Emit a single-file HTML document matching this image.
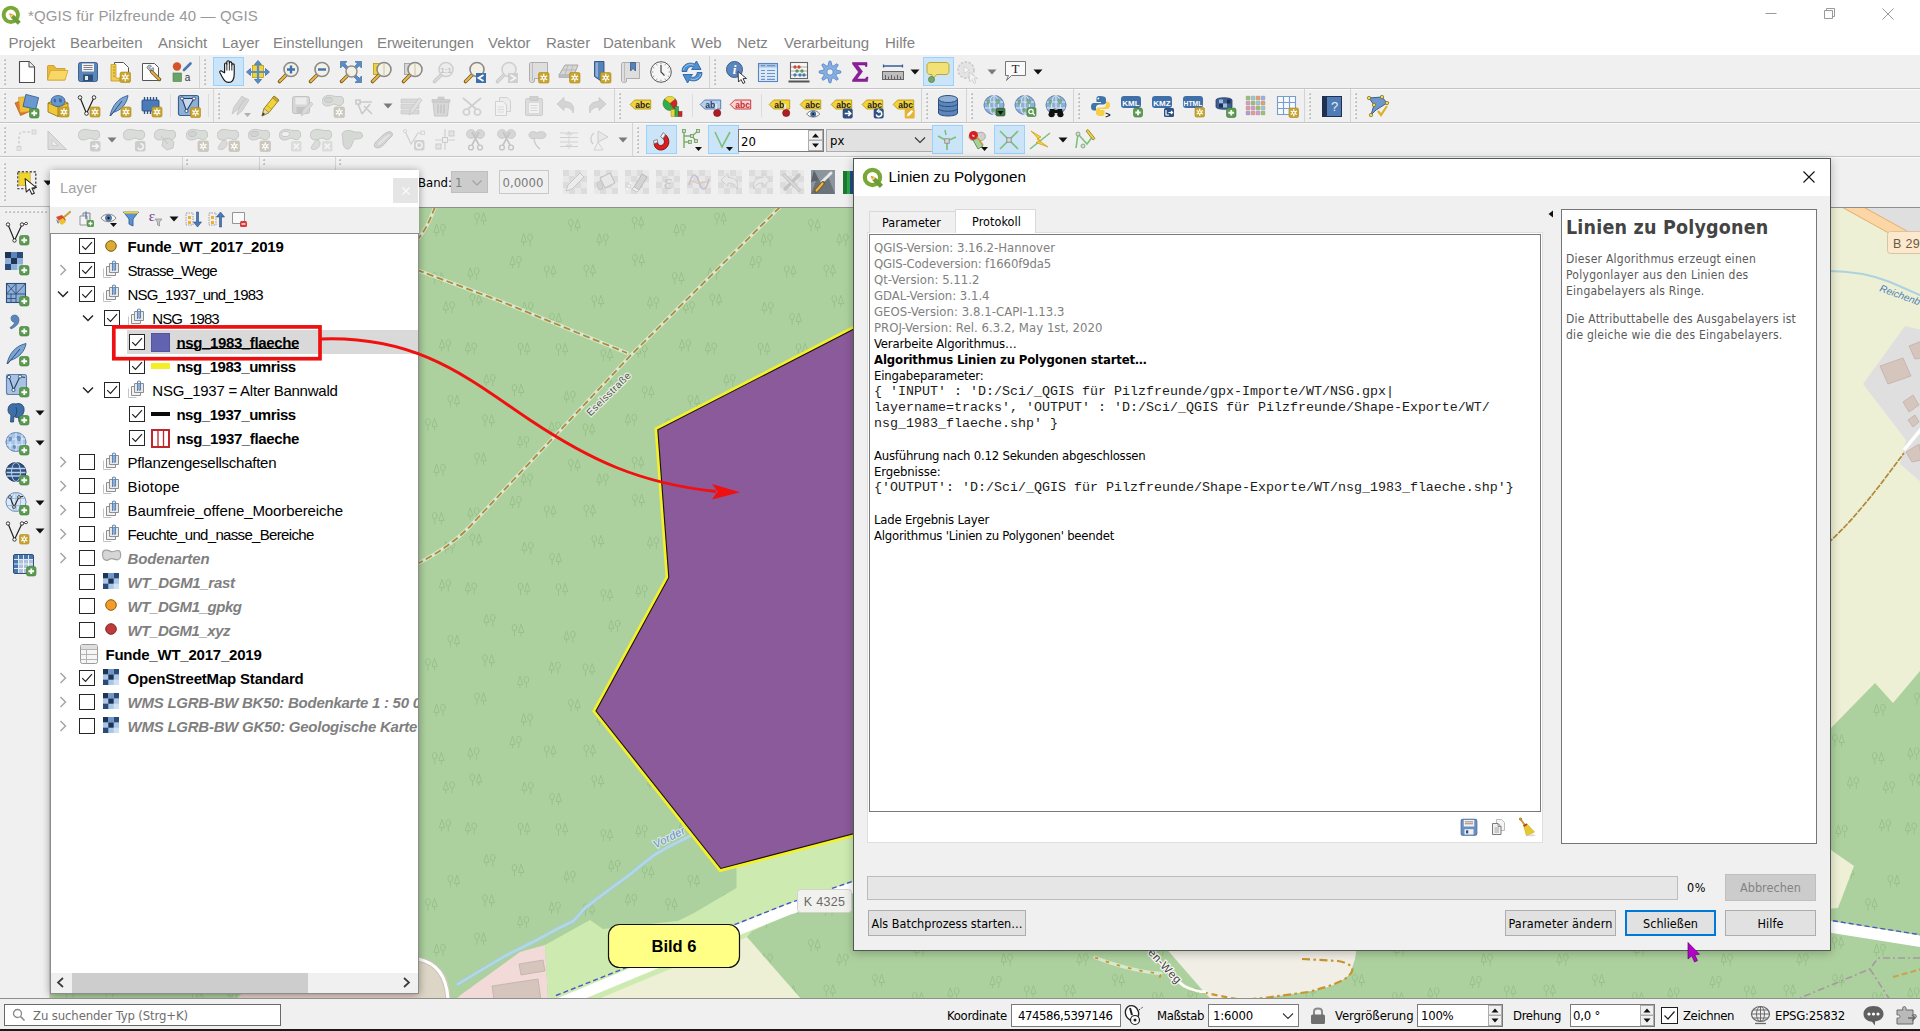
<!DOCTYPE html>
<html lang="de">
<head>
<meta charset="utf-8">
<title>QGIS für Pilzfreunde 40 — QGIS</title>
<style>
html,body{margin:0;padding:0;}
body{width:1920px;height:1031px;overflow:hidden;background:#f0f0f0;position:relative;font-family:"Liberation Sans",sans-serif;font-size:15px;color:#000;}
.a{position:absolute;}
.t{position:absolute;white-space:nowrap;line-height:1;}
.dj{font-family:"DejaVu Sans Condensed","DejaVu Sans","Liberation Sans",sans-serif;}
.mono{font-family:"Liberation Mono",monospace;}
svg{position:absolute;overflow:visible;}
</style>
</head>
<body>
<!-- title bar -->
<div class="a" style="left:0;top:0;width:1920px;height:30px;background:#fff;"></div>
<svg style="left:1.400px;top:4.800px" width="21.600" height="21.600" viewBox="0 0 22 22"><circle cx="10" cy="10" r="7.300" fill="none" stroke="#7aa838" stroke-width="4"/><path d="M11.500 11.500L18.600 18.600" stroke="#6c9c34" stroke-width="4.300"/><path d="M8.300 8.300L12.800 9.800L9.800 12.800Z" fill="#ee8a1e"/><path d="M10.500 10L12.800 9.800L9.800 12.800L10 10.500Z" fill="#f0e070"/></svg>
<div class="t" style="left:28px;top:7.9px;font-size:15px;color:#999;letter-spacing:0.13px;">*QGIS für Pilzfreunde 40 — QGIS</div>
<svg style="left:1760px;top:0" width="160" height="30" viewBox="0 0 160 30">
  <path d="M5.5 13.5 H16.5" stroke="#999" stroke-width="1" fill="none"/>
  <path d="M64.500 10.500 h8 v8 h-8 z M66.500 10.500 v-2 h8 v8 h-2" stroke="#999" stroke-width="1" fill="none"/>
  <path d="M122.500 8.500 L133.500 19.500 M133.500 8.500 L122.500 19.500" stroke="#999" stroke-width="1" fill="none"/>
</svg>
<!-- menu bar -->
<div class="a" style="left:0;top:30px;width:1920px;height:25px;background:#fff;"></div>
<div class="t" style="left:8.5px;top:34.5px;font-size:15px;color:#828282;">Projekt</div>
<div class="t" style="left:70px;top:34.5px;font-size:15px;color:#828282;">Bearbeiten</div>
<div class="t" style="left:158px;top:34.5px;font-size:15px;color:#828282;">Ansicht</div>
<div class="t" style="left:222px;top:34.5px;font-size:15px;color:#828282;">Layer</div>
<div class="t" style="left:273px;top:34.5px;font-size:15px;color:#828282;">Einstellungen</div>
<div class="t" style="left:377px;top:34.5px;font-size:15px;color:#828282;">Erweiterungen</div>
<div class="t" style="left:488px;top:34.5px;font-size:15px;color:#828282;">Vektor</div>
<div class="t" style="left:546px;top:34.5px;font-size:15px;color:#828282;">Raster</div>
<div class="t" style="left:603px;top:34.5px;font-size:15px;color:#828282;">Datenbank</div>
<div class="t" style="left:691px;top:34.5px;font-size:15px;color:#828282;">Web</div>
<div class="t" style="left:737px;top:34.5px;font-size:15px;color:#828282;">Netz</div>
<div class="t" style="left:784px;top:34.5px;font-size:15px;color:#828282;">Verarbeitung</div>
<div class="t" style="left:885px;top:34.5px;font-size:15px;color:#828282;">Hilfe</div>
<!-- toolbars -->
<div class="a" style="left:0;top:55px;width:1920px;height:152px;background:#f0f0f0;"></div>
<div class="a" style="left:0px;top:88px;width:1920px;height:1px;background:#c4c4c4;"></div>
<div class="a" style="left:0px;top:122px;width:1920px;height:1px;background:#c4c4c4;"></div>
<div class="a" style="left:0px;top:156px;width:1920px;height:1px;background:#c4c4c4;"></div>
<div class="a" style="left:0px;top:89px;width:1920px;height:1px;background:#fafafa;"></div>
<div class="a" style="left:0px;top:123px;width:1920px;height:1px;background:#fafafa;"></div>
<div class="a" style="left:0px;top:157px;width:1920px;height:1px;background:#fafafa;"></div>
<svg style="left:2.5px;top:57px" width="4" height="28" viewBox="0 0 4 28"><rect x="1.300" y="2.3" width="1.500" height="1.500" fill="#a2a2a2"/><rect x=".3" y="1.3" width="1.200" height="1.200" fill="#fdfdfd"/><rect x="1.300" y="6.3" width="1.500" height="1.500" fill="#a2a2a2"/><rect x=".3" y="5.3" width="1.200" height="1.200" fill="#fdfdfd"/><rect x="1.300" y="10.3" width="1.500" height="1.500" fill="#a2a2a2"/><rect x=".3" y="9.3" width="1.200" height="1.200" fill="#fdfdfd"/><rect x="1.300" y="14.3" width="1.500" height="1.500" fill="#a2a2a2"/><rect x=".3" y="13.3" width="1.200" height="1.200" fill="#fdfdfd"/><rect x="1.300" y="18.3" width="1.500" height="1.500" fill="#a2a2a2"/><rect x=".3" y="17.3" width="1.200" height="1.200" fill="#fdfdfd"/><rect x="1.300" y="22.3" width="1.500" height="1.500" fill="#a2a2a2"/><rect x=".3" y="21.3" width="1.200" height="1.200" fill="#fdfdfd"/><rect x="1.300" y="26.3" width="1.500" height="1.500" fill="#a2a2a2"/><rect x=".3" y="25.3" width="1.200" height="1.200" fill="#fdfdfd"/></svg>
<svg style="left:14.0px;top:60.0px" width="24" height="24" viewBox="0 0 24 24"><path d="M5.500 1.500H15L20.500 7V22.500H5.500Z" fill="#fff" stroke="#4a4a4a" stroke-width="1.100" stroke-linejoin="round"/><path d="M15 1.500V7H20.500" fill="#eee" stroke="#4a4a4a" stroke-width="1" stroke-linejoin="round"/></svg>
<svg style="left:45.0px;top:60.0px" width="24" height="24" viewBox="0 0 24 24"><path d="M2.500 6V20H20V8.500H11L9 5.500H3Z" fill="#e9b93c" stroke="#c7951e" stroke-width=".8"/><path d="M2.500 20L5.500 10.500H23L20 20Z" fill="#f7d766" stroke="#d6a62a" stroke-width=".8"/></svg>
<svg style="left:76.0px;top:60.0px" width="24" height="24" viewBox="0 0 24 24"><rect x="2.500" y="2.500" width="19" height="19" rx="2" fill="#5d86b8" stroke="#3d628f" stroke-width="1"/><rect x="6" y="3.500" width="12" height="8" fill="#f2f2f2"/><path d="M7.500 5.500H16.500M7.500 7.500H16.500M7.500 9.500H16.500" stroke="#666" stroke-width=".8"/><rect x="7" y="14.500" width="10" height="6.500" fill="#2f4f78"/><rect x="9" y="16" width="3" height="4" fill="#e8e8e8"/></svg>
<svg style="left:108.0px;top:60.0px" width="24" height="24" viewBox="0 0 24 24"><path d="M6.500 2.500H15.500L20.500 7.500V20.500H6.500Z" fill="#fff" stroke="#555" stroke-width="1"/><path d="M3 4.500H8V18H12V21H3Z" fill="#f1cd55" stroke="#c39a1c" stroke-width=".8"/><path d="M5 7H7M5 10H7M5 13H7M5 16H7" stroke="#a27b12" stroke-width=".8"/><rect x="12" y="12" width="10.5" height="10.5" rx="1.5" fill="#caa52e" stroke="#a8861c" stroke-width=".6"/><path d="M17.25 13.37L17.25 21.13M20.61 15.31L13.89 19.19M20.61 19.19L13.89 15.31" stroke="#fff" stroke-width="1.250"/><circle cx="17.25" cy="17.25" r="2.02" fill="#fff"/><circle cx="17.25" cy="17.25" r="0.97" fill="#caa52e"/></svg>
<svg style="left:139.0px;top:60.0px" width="24" height="24" viewBox="0 0 24 24"><path d="M3.500 3.500H15.500L19.500 7.500V20.500H3.500Z" fill="#fff" stroke="#555" stroke-width="1"/><path d="M8 8C8 5.500 11 4.500 12.500 6L10.500 8L12 9.500L14 7.500C15.500 9 14.500 12 12 12Z" fill="#b9c6d6" stroke="#5a6a7c" stroke-width=".8"/><path d="M12.500 11.500L20.500 19.500" stroke="#7a5a20" stroke-width="3.400" stroke-linecap="round"/><path d="M12.800 11.800L20.200 19.200" stroke="#e5b648" stroke-width="1.800" stroke-linecap="round"/></svg>
<svg style="left:170.0px;top:60.0px" width="24" height="24" viewBox="0 0 24 24"><circle cx="7" cy="6.500" r="4.200" fill="#d4552a"/><rect x="3" y="13" width="8.500" height="8.500" fill="#6aa36a" stroke="#4a7f4a" stroke-width=".6"/><path d="M14 10L20.500 3.500" stroke="#4878b0" stroke-width="2.600" stroke-linecap="round"/><text x="17.500" y="21" font-family="Liberation Sans,sans-serif" font-size="10" text-anchor="middle" fill="#333">a</text></svg>
<div class="a" style="left:199px;top:56px;width:1px;height:32px;background:#d4d4d4;"></div>
<svg style="left:202.5px;top:57px" width="4" height="28" viewBox="0 0 4 28"><rect x="1.300" y="2.3" width="1.500" height="1.500" fill="#a2a2a2"/><rect x=".3" y="1.3" width="1.200" height="1.200" fill="#fdfdfd"/><rect x="1.300" y="6.3" width="1.500" height="1.500" fill="#a2a2a2"/><rect x=".3" y="5.3" width="1.200" height="1.200" fill="#fdfdfd"/><rect x="1.300" y="10.3" width="1.500" height="1.500" fill="#a2a2a2"/><rect x=".3" y="9.3" width="1.200" height="1.200" fill="#fdfdfd"/><rect x="1.300" y="14.3" width="1.500" height="1.500" fill="#a2a2a2"/><rect x=".3" y="13.3" width="1.200" height="1.200" fill="#fdfdfd"/><rect x="1.300" y="18.3" width="1.500" height="1.500" fill="#a2a2a2"/><rect x=".3" y="17.3" width="1.200" height="1.200" fill="#fdfdfd"/><rect x="1.300" y="22.3" width="1.500" height="1.500" fill="#a2a2a2"/><rect x=".3" y="21.3" width="1.200" height="1.200" fill="#fdfdfd"/><rect x="1.300" y="26.3" width="1.500" height="1.500" fill="#a2a2a2"/><rect x=".3" y="25.3" width="1.200" height="1.200" fill="#fdfdfd"/></svg>
<div class="a" style="left:213px;top:57px;width:31px;height:29px;background:#cce4f7;border:1px solid #99d1ff;box-sizing:border-box;"></div><svg style="left:216.0px;top:60.0px" width="24" height="24" viewBox="0 0 24 24"><g transform="translate(12 12) scale(1.13) translate(-11 -12.300)"><path d="M8 13V5.500C8 4 10 4 10 5.500V3.500C10 2 12.200 2 12.200 3.500V4.500C12.200 3 14.400 3 14.400 4.500V6C14.400 4.800 16.500 4.800 16.500 6.200V14C16.500 18 15 21.500 11.500 21.500C8.500 21.500 7.500 19.500 5.500 16L3.800 12.800C3.200 11.500 4.800 10.600 5.800 11.800Z" fill="#fff" stroke="#111" stroke-width="1" stroke-linejoin="round"/><path d="M10 5.500V11M12.200 4.500V11M14.400 6V11" stroke="#111" stroke-width=".8"/></g></svg>
<svg style="left:246.0px;top:60.0px" width="24" height="24" viewBox="0 0 24 24"><rect x="6.500" y="5.500" width="11" height="12" fill="#f0d23c" stroke="#b89c10" stroke-width=".8"/><path d="M12 .5L15.500 4.500H8.500ZM12 23.500L15.500 19.500H8.500ZM.5 12L4.500 8.500V15.500ZM23.500 12L19.500 8.500V15.500Z" fill="#5a8cc6" stroke="#355f95" stroke-width=".7"/><path d="M12 4V20M4 12H20" stroke="#5a8cc6" stroke-width="2.200"/></svg>
<svg style="left:277.0px;top:60.0px" width="24" height="24" viewBox="0 0 24 24"><path d="M9.5 14.5L2.5 21.5" stroke="#7a5a20" stroke-width="3.6" stroke-linecap="round"/><path d="M9.3 14.7L2.8 21.2" stroke="#e8b84a" stroke-width="2" stroke-linecap="round"/><circle cx="14" cy="9.500" r="7" fill="#f4f1e4" stroke="#8a8a8a" stroke-width="1.6"/><path d="M10 9.500H18M14 5.500V13.500" stroke="#3d73b5" stroke-width="2.400"/></svg>
<svg style="left:308.0px;top:60.0px" width="24" height="24" viewBox="0 0 24 24"><path d="M9.5 14.5L2.5 21.5" stroke="#7a5a20" stroke-width="3.6" stroke-linecap="round"/><path d="M9.3 14.7L2.8 21.2" stroke="#e8b84a" stroke-width="2" stroke-linecap="round"/><circle cx="14" cy="9.500" r="7" fill="#f4f1e4" stroke="#8a8a8a" stroke-width="1.6"/><path d="M10 9.500H18" stroke="#3d73b5" stroke-width="2.400"/></svg>
<svg style="left:339.0px;top:60.0px" width="24" height="24" viewBox="0 0 24 24"><path d="M1.500 1.500H8L5.800 3.700L9 7L7 9L3.700 5.800L1.500 8ZM22.500 1.500V8L20.300 5.800L17 9L15 7L18.300 3.700L16 1.500ZM22.500 22.500H16L18.300 20.300L15 17L17 15L20.300 18.300L22.500 16Z" fill="#5a8cc6" stroke="#355f95" stroke-width=".6"/><path d="M9 15L2.500 21.500" stroke="#7a5a20" stroke-width="3.400" stroke-linecap="round"/><path d="M9 15L2.800 21.200" stroke="#e8b84a" stroke-width="1.800" stroke-linecap="round"/><circle cx="12.500" cy="11.500" r="5.500" fill="#f4f1e4" fill-opacity=".8" stroke="#8a8a8a" stroke-width="1.400"/></svg>
<svg style="left:370.0px;top:60.0px" width="24" height="24" viewBox="0 0 24 24"><rect x="3.500" y="3.500" width="9" height="11" fill="#f0d23c" stroke="#b89c10" stroke-width=".8"/><path d="M9.5 14.5L2.5 21.5" stroke="#7a5a20" stroke-width="3.6" stroke-linecap="round"/><path d="M9.3 14.7L2.8 21.2" stroke="#e8b84a" stroke-width="2" stroke-linecap="round"/><circle cx="14" cy="9.500" r="7" fill="#f4f1e4" stroke="#8a8a8a" stroke-width="1.6"/><path d="M14 3V16" stroke="#c8c2a8" stroke-width="1"/></svg>
<svg style="left:401.0px;top:60.0px" width="24" height="24" viewBox="0 0 24 24"><rect x="3.500" y="3.500" width="9" height="11" fill="#d6d6d6" stroke="#9a9a9a" stroke-width=".8"/><path d="M9.5 14.5L2.5 21.5" stroke="#7a5a20" stroke-width="3.6" stroke-linecap="round"/><path d="M9.3 14.7L2.8 21.2" stroke="#e8b84a" stroke-width="2" stroke-linecap="round"/><circle cx="14" cy="9.500" r="7" fill="#f4f1e4" stroke="#8a8a8a" stroke-width="1.6"/><path d="M14 3V16" stroke="#c8c2a8" stroke-width="1"/></svg>
<svg style="left:432.0px;top:60.0px" width="24" height="24" viewBox="0 0 24 24"><path d="M9.5 14.5L2.5 21.5" stroke="#c8c8c8" stroke-width="3.6" stroke-linecap="round"/><path d="M9.3 14.7L2.8 21.2" stroke="#d8d8d8" stroke-width="2" stroke-linecap="round"/><circle cx="14" cy="9.500" r="7" fill="#ececec" stroke="#cfcfcf" stroke-width="1.6"/><text x="14" y="12.500" font-family="Liberation Sans,sans-serif" font-size="8" font-weight="bold" text-anchor="middle" fill="#c4c4c4">1:1</text></svg>
<svg style="left:463.0px;top:60.0px" width="24" height="24" viewBox="0 0 24 24"><path d="M9.5 14.5L2.5 21.5" stroke="#7a5a20" stroke-width="3.6" stroke-linecap="round"/><path d="M9.3 14.7L2.8 21.2" stroke="#e8b84a" stroke-width="2" stroke-linecap="round"/><circle cx="14" cy="9.500" r="7" fill="#f4f1e4" stroke="#8a8a8a" stroke-width="1.6"/><rect x="13" y="13" width="10" height="10" fill="#3f6fa8"/><path d="M20.500 15L15.500 18L20.500 21" fill="none" stroke="#fff" stroke-width="1.800"/></svg>
<svg style="left:495.0px;top:60.0px" width="24" height="24" viewBox="0 0 24 24"><path d="M9.5 14.5L2.5 21.5" stroke="#c8c8c8" stroke-width="3.6" stroke-linecap="round"/><path d="M9.3 14.7L2.8 21.2" stroke="#d8d8d8" stroke-width="2" stroke-linecap="round"/><circle cx="14" cy="9.500" r="7" fill="#ececec" stroke="#cfcfcf" stroke-width="1.6"/><rect x="13" y="13" width="10" height="10" fill="#cfcfcf"/><path d="M15.500 15L20.500 18L15.500 21" fill="none" stroke="#f4f4f4" stroke-width="1.800"/></svg>
<svg style="left:526.0px;top:60.0px" width="24" height="24" viewBox="0 0 24 24"><path d="M5 2.500H21.500V18.500H8.500V21C8.500 23 4.500 23.200 3.500 21L3.500 4C3.500 3 4 2.500 5 2.500Z" fill="#dedede" stroke="#a6a6a6" stroke-width=".9" stroke-linejoin="round"/><path d="M6.500 3V20.500C6.500 22 8.500 21.500 8.500 20.500" fill="none" stroke="#b4b4b4" stroke-width=".8"/><rect x="12.5" y="12.5" width="10.5" height="10.5" rx="1.5" fill="#caa52e" stroke="#a8861c" stroke-width=".6"/><path d="M17.75 13.87L17.75 21.63M21.11 15.81L14.39 19.69M21.11 19.69L14.39 15.81" stroke="#fff" stroke-width="1.250"/><circle cx="17.75" cy="17.75" r="2.02" fill="#fff"/><circle cx="17.75" cy="17.75" r="0.97" fill="#caa52e"/></svg>
<svg style="left:557.0px;top:60.0px" width="24" height="24" viewBox="0 0 24 24"><path d="M2 15L8 5H21L17 15Z" fill="#d6d6d6" stroke="#a2a2a2" stroke-width=".9"/><path d="M5 10H19M11 5L8 15M16 5L13 15" stroke="#b4b4b4" stroke-width=".8"/><path d="M2 15V17.500L17 17.500V15" fill="#bdbdbd" stroke="#a2a2a2" stroke-width=".6"/><rect x="12.5" y="12.5" width="10.5" height="10.5" rx="1.5" fill="#caa52e" stroke="#a8861c" stroke-width=".6"/><path d="M17.75 13.87L17.75 21.63M21.11 15.81L14.39 19.69M21.11 19.69L14.39 15.81" stroke="#fff" stroke-width="1.250"/><circle cx="17.75" cy="17.75" r="2.02" fill="#fff"/><circle cx="17.75" cy="17.75" r="0.97" fill="#caa52e"/></svg>
<svg style="left:588.0px;top:60.0px" width="24" height="24" viewBox="0 0 24 24"><path d="M6.500 1.500H16V23L6.500 16.500Z" fill="#5582ba" stroke="#2e4f7c" stroke-width=".9" stroke-linejoin="round"/><path d="M7.500 2.500H10V17.500L7.500 16Z" fill="#8fb0d6"/><rect x="12.5" y="12.5" width="10.5" height="10.5" rx="1.5" fill="#caa52e" stroke="#a8861c" stroke-width=".6"/><path d="M17.75 13.87L17.75 21.63M21.11 15.81L14.39 19.69M21.11 19.69L14.39 15.81" stroke="#fff" stroke-width="1.250"/><circle cx="17.75" cy="17.75" r="2.02" fill="#fff"/><circle cx="17.75" cy="17.75" r="0.97" fill="#caa52e"/></svg>
<svg style="left:618.0px;top:60.0px" width="24" height="24" viewBox="0 0 24 24"><path d="M5 2.500H21.500V18.500H8.500V21C8.500 23 4.500 23.200 3.500 21L3.500 4C3.500 3 4 2.500 5 2.500Z" fill="#dedede" stroke="#a6a6a6" stroke-width=".9" stroke-linejoin="round"/><path d="M6.500 3V20.500C6.500 22 8.500 21.500 8.500 20.500" fill="none" stroke="#b4b4b4" stroke-width=".8"/><path d="M12.500 2.500H17.500V11L15 8.500L12.500 11Z" fill="#5582ba" stroke="#2e4f7c" stroke-width=".7"/></svg>
<svg style="left:649.0px;top:60.0px" width="24" height="24" viewBox="0 0 24 24"><circle cx="12" cy="12" r="10.300" fill="#f6f6f6" stroke="#5a5a5a" stroke-width="1"/><path d="M12 5V12L15.500 15.500" fill="none" stroke="#444" stroke-width="1.200"/><path d="M12 3V4.300M12 19.700V21M3 12H4.300M19.700 12H21M7.500 4.200L8.100 5.300M16.500 4.200L15.900 5.300M4.200 7.500L5.300 8.100M19.800 7.500L18.700 8.100M4.200 16.500L5.300 15.900M19.800 16.500L18.700 15.900M7.500 19.800L8.100 18.700M16.500 19.800L15.900 18.700" stroke="#777" stroke-width=".8"/></svg>
<svg style="left:680.0px;top:60.0px" width="24" height="24" viewBox="0 0 24 24"><path d="M2 11.500C2 4.500 9 1.500 14.500 4L16.500 1L21 9.500H11.500L13.500 6.800C10.500 5.800 7 7.500 6.800 11.500ZM22 12.500C22 19.500 15 22.500 9.500 20L7.500 23L3 14.500H12.500L10.500 17.200C13.500 18.200 17 16.500 17.200 12.500Z" fill="#4f8fd0" stroke="#2a62a4" stroke-width=".9" stroke-linejoin="round"/><path d="M3.500 10C4 6 9 3.500 13.500 5M20.500 14C20 18 15 20.500 10.500 19" fill="none" stroke="#9cc4ee" stroke-width="1"/></svg>
<div class="a" style="left:709px;top:56px;width:1px;height:32px;background:#d4d4d4;"></div>
<svg style="left:712.5px;top:57px" width="4" height="28" viewBox="0 0 4 28"><rect x="1.300" y="2.3" width="1.500" height="1.500" fill="#a2a2a2"/><rect x=".3" y="1.3" width="1.200" height="1.200" fill="#fdfdfd"/><rect x="1.300" y="6.3" width="1.500" height="1.500" fill="#a2a2a2"/><rect x=".3" y="5.3" width="1.200" height="1.200" fill="#fdfdfd"/><rect x="1.300" y="10.3" width="1.500" height="1.500" fill="#a2a2a2"/><rect x=".3" y="9.3" width="1.200" height="1.200" fill="#fdfdfd"/><rect x="1.300" y="14.3" width="1.500" height="1.500" fill="#a2a2a2"/><rect x=".3" y="13.3" width="1.200" height="1.200" fill="#fdfdfd"/><rect x="1.300" y="18.3" width="1.500" height="1.500" fill="#a2a2a2"/><rect x=".3" y="17.3" width="1.200" height="1.200" fill="#fdfdfd"/><rect x="1.300" y="22.3" width="1.500" height="1.500" fill="#a2a2a2"/><rect x=".3" y="21.3" width="1.200" height="1.200" fill="#fdfdfd"/><rect x="1.300" y="26.3" width="1.500" height="1.500" fill="#a2a2a2"/><rect x=".3" y="25.3" width="1.200" height="1.200" fill="#fdfdfd"/></svg>
<svg style="left:725.0px;top:60.0px" width="24" height="24" viewBox="0 0 24 24"><circle cx="9.500" cy="9.500" r="8" fill="#5b86bb" stroke="#3a5f90" stroke-width="1"/><text x="9.500" y="14" font-family="Liberation Serif,serif" font-size="13" font-style="italic" font-weight="bold" text-anchor="middle" fill="#fff">i</text><path d="M13 11.500L13.500 22L16 19.500L18 23.500L20 22.500L18 18.700L21.500 18.500Z" fill="#fff" stroke="#222" stroke-width=".9" stroke-linejoin="round"/></svg>
<svg style="left:756.0px;top:60.0px" width="24" height="24" viewBox="0 0 24 24"><rect x="2.500" y="3.500" width="19" height="18" fill="#dce9f7" stroke="#5a86c0" stroke-width="1.100"/><rect x="3" y="4" width="18" height="3.500" fill="#a9c6e8"/><path d="M5 5.700H9M11 5.700H19" stroke="#5a86c0" stroke-width="1.100"/><path d="M5 10.500H9M11 10.500H19M5 13.500H9M11 13.500H19M5 16.500H9M11 16.500H19M5 19.300H9M11 19.300H19" stroke="#6a94c8" stroke-width="1.200"/></svg>
<svg style="left:787.0px;top:60.0px" width="24" height="24" viewBox="0 0 24 24"><rect x="3.500" y="2.500" width="17" height="16" fill="#f8f8f8" stroke="#666" stroke-width="1.100"/><path d="M4 7H20M4 11H20M4 15H20" stroke="#888" stroke-width=".7"/><circle cx="8" cy="7" r="1.700" fill="#c94a3a"/><circle cx="12" cy="7" r="1.700" fill="#c94a3a"/><circle cx="10" cy="11" r="1.700" fill="#5b9b50"/><circle cx="15" cy="11" r="1.700" fill="#5b9b50"/><circle cx="8" cy="15" r="1.700" fill="#4b7bb5"/><circle cx="13" cy="15" r="1.700" fill="#4b7bb5"/><circle cx="17" cy="15" r="1.700" fill="#4b7bb5"/><path d="M1.500 21.500H22.500" stroke="#555" stroke-width="2"/></svg>
<svg style="left:818.0px;top:60.0px" width="24" height="24" viewBox="0 0 24 24"><path d="M22.8 11.1L22.8 12.9L18.2 14.0L17.8 15.0L20.3 19.0L19.0 20.3L15.0 17.8L14.0 18.2L12.9 22.8L11.1 22.8L10.0 18.2L9.0 17.8L5.0 20.3L3.7 19.0L6.2 15.0L5.8 14.0L1.2 12.9L1.2 11.1L5.8 10.0L6.2 9.0L3.7 5.0L5.0 3.7L9.0 6.2L10.0 5.8L11.1 1.2L12.9 1.2L14.0 5.8L15.0 6.2L19.0 3.7L20.3 5.0L17.8 9.0L18.2 10.0Z" fill="#86aee2" stroke="#4f80c0" stroke-width=".8" stroke-linejoin="round"/><circle cx="12" cy="12" r="3.200" fill="#f0f0f0" stroke="#4f80c0" stroke-width=".8"/></svg>
<svg style="left:848.0px;top:60.0px" width="24" height="24" viewBox="0 0 24 24"><path d="M4.500 2.500H19V6.500H17.500C17.500 5 17 5 15.500 5H9.500L14.500 11.500L9 19H16C17.500 19 18 18.500 18.500 17H20L19.500 21.500H4.500V20L10.500 12L4.500 4Z" fill="#8e1e9a" stroke="#6a0e78" stroke-width=".5"/></svg>
<svg style="left:881.0px;top:60.0px" width="24" height="24" viewBox="0 0 24 24"><path d="M2.500 4.500V7.500M21.500 4.500V7.500M2.500 6H21.500" stroke="#355f95" stroke-width="1.300"/><rect x="1.500" y="11.500" width="21" height="8" fill="#bdbdbd" stroke="#666" stroke-width="1"/><path d="M4.500 15V19M7.500 16.500V19M10.500 15V19M13.500 16.500V19M16.500 15V19M19.500 16.500V19" stroke="#555" stroke-width=".9"/></svg>
<svg style="left:910px;top:69px" width="10" height="6" viewBox="0 0 10 6"><path d="M0.500 .5H9.500L5 5.500Z" fill="#111"/></svg>
<div class="a" style="left:923px;top:57px;width:31px;height:29px;background:#cce4f7;border:1px solid #99d1ff;box-sizing:border-box;"></div><svg style="left:926.0px;top:60.0px" width="24" height="24" viewBox="0 0 24 24"><path d="M4 2.500H20C22 2.500 23 4 23 6V11C23 13 22 14.500 20 14.500H11L6 19V14.500H4C2 14.500 1 13 1 11V6C1 4 2 2.500 4 2.500Z" fill="#f2e176" stroke="#b8a83a" stroke-width="1"/><circle cx="5.500" cy="19.500" r="3" fill="#7aa86a" stroke="#4f7f42" stroke-width=".8"/></svg>
<svg style="left:956.0px;top:60.0px" width="24" height="24" viewBox="0 0 24 24"><circle cx="10" cy="10" r="8" fill="#e4e4e4" stroke="#cdcdcd" stroke-width="1.800" stroke-dasharray="2.500 1.500"/><path d="M8 6.500V13.500L13.500 10Z" fill="#f6f6f6" stroke="#cfcfcf" stroke-width=".8"/><path d="M13 12L13.500 22L16 19.500L18 23.500L20 22.500L18 18.700L21.500 18.500Z" fill="#f2f2f2" stroke="#cdcdcd" stroke-width=".9" stroke-linejoin="round"/></svg>
<svg style="left:987px;top:69px" width="10" height="6" viewBox="0 0 10 6"><path d="M0.500 .5H9.500L5 5.500Z" fill="#7a7a7a"/></svg>
<svg style="left:1003.0px;top:60.0px" width="24" height="24" viewBox="0 0 24 24"><path d="M2.500 1.500H22.500V15.500H8.500L3.500 20.500L5.500 15.500H2.500Z" fill="#fafafa" stroke="#777" stroke-width="1"/><text x="12.500" y="13" font-family="Liberation Serif,serif" font-size="13" text-anchor="middle" fill="#222">T</text></svg>
<svg style="left:1033px;top:69px" width="10" height="6" viewBox="0 0 10 6"><path d="M0.500 .5H9.500L5 5.500Z" fill="#111"/></svg>
<svg style="left:2.5px;top:91px" width="4" height="28" viewBox="0 0 4 28"><rect x="1.300" y="2.3" width="1.500" height="1.500" fill="#a2a2a2"/><rect x=".3" y="1.3" width="1.200" height="1.200" fill="#fdfdfd"/><rect x="1.300" y="6.3" width="1.500" height="1.500" fill="#a2a2a2"/><rect x=".3" y="5.3" width="1.200" height="1.200" fill="#fdfdfd"/><rect x="1.300" y="10.3" width="1.500" height="1.500" fill="#a2a2a2"/><rect x=".3" y="9.3" width="1.200" height="1.200" fill="#fdfdfd"/><rect x="1.300" y="14.3" width="1.500" height="1.500" fill="#a2a2a2"/><rect x=".3" y="13.3" width="1.200" height="1.200" fill="#fdfdfd"/><rect x="1.300" y="18.3" width="1.500" height="1.500" fill="#a2a2a2"/><rect x=".3" y="17.3" width="1.200" height="1.200" fill="#fdfdfd"/><rect x="1.300" y="22.3" width="1.500" height="1.500" fill="#a2a2a2"/><rect x=".3" y="21.3" width="1.200" height="1.200" fill="#fdfdfd"/><rect x="1.300" y="26.3" width="1.500" height="1.500" fill="#a2a2a2"/><rect x=".3" y="25.3" width="1.200" height="1.200" fill="#fdfdfd"/></svg>
<svg style="left:15.0px;top:94.0px" width="24" height="24" viewBox="0 0 24 24"><path d="M0 9L10 5L15.500 17L5.600 21.500Z" fill="#e0762e" stroke="#b4541a" stroke-width=".7"/><path d="M3.500 3.400L14 2.500L15 17.500L5 18.500Z" fill="#f0c03a" stroke="#c8962a" stroke-width=".7"/><path d="M10.900 .4L23.600 3.700L20.700 15.200L8 12.400Z" fill="#6a98d0" stroke="#355f95" stroke-width=".9"/><rect x="14.5" y="14.5" width="9.5" height="9.5" rx="2" fill="#5b9b50" stroke="#3f7a38" stroke-width=".6"/><path d="M16.4 19.25H22.1M19.25 16.4V22.1" stroke="#fff" stroke-width="1.8"/></svg>
<svg style="left:46.0px;top:94.0px" width="24" height="24" viewBox="0 0 24 24"><path d="M2 9L12 5L22 9V18L12 22.500L2 18Z" fill="#f0c93a" stroke="#8a6a10" stroke-width=".8"/><path d="M2 9L12 13L22 9M12 13V22.500" fill="none" stroke="#8a6a10" stroke-width=".8"/><ellipse cx="12" cy="7" rx="7" ry="5.500" fill="#6b97cf" stroke="#355f95" stroke-width=".8"/><path d="M8 5C10 4 11 7 9.500 8.500C8 9 7 7 8 5ZM13 4.500C16 4 17 7 15 8.500C13.500 9 12.500 6.500 13 4.500Z" fill="#3c6aa2"/><rect x="13" y="13" width="10" height="10" rx="1.5" fill="#caa52e" stroke="#a8861c" stroke-width=".6"/><path d="M18.00 14.30L18.00 21.70M21.20 16.15L14.80 19.85M21.20 19.85L14.80 16.15" stroke="#fff" stroke-width="1.250"/><circle cx="18.0" cy="18.0" r="1.92" fill="#fff"/><circle cx="18.0" cy="18.0" r="0.93" fill="#caa52e"/></svg>
<svg style="left:77.0px;top:94.0px" width="24" height="24" viewBox="0 0 24 24"><path d="M3 3.500L9.500 19.500L17 3.500" fill="none" stroke="#222" stroke-width="1.200"/><circle cx="3" cy="3.500" r="1.800" fill="#fff" stroke="#222" stroke-width=".9"/><circle cx="17" cy="3.500" r="1.800" fill="#fff" stroke="#222" stroke-width=".9"/><circle cx="9.500" cy="19.500" r="1.800" fill="#fff" stroke="#222" stroke-width=".9"/><rect x="13" y="13" width="10" height="10" rx="1.5" fill="#caa52e" stroke="#a8861c" stroke-width=".6"/><path d="M18.00 14.30L18.00 21.70M21.20 16.15L14.80 19.85M21.20 19.85L14.80 16.15" stroke="#fff" stroke-width="1.250"/><circle cx="18.0" cy="18.0" r="1.92" fill="#fff"/><circle cx="18.0" cy="18.0" r="0.93" fill="#caa52e"/></svg>
<svg style="left:108.0px;top:94.0px" width="24" height="24" viewBox="0 0 24 24"><path d="M2 22C4 12 10 4 20 1.500C19 9 14 16 5 18.500Z" fill="#7ea4d4" stroke="#355f95" stroke-width=".9"/><path d="M2.500 22L14 7" stroke="#2e4f7c" stroke-width="1"/><rect x="13" y="13" width="10" height="10" rx="1.5" fill="#caa52e" stroke="#a8861c" stroke-width=".6"/><path d="M18.00 14.30L18.00 21.70M21.20 16.15L14.80 19.85M21.20 19.85L14.80 16.15" stroke="#fff" stroke-width="1.250"/><circle cx="18.0" cy="18.0" r="1.92" fill="#fff"/><circle cx="18.0" cy="18.0" r="0.93" fill="#caa52e"/></svg>
<svg style="left:139.0px;top:94.0px" width="24" height="24" viewBox="0 0 24 24"><rect x="3" y="6" width="17" height="11" rx="1" fill="#4a7ab8" stroke="#2a4f82" stroke-width=".9"/><path d="M5.500 6V3M8.500 6V3M11.500 6V3M14.500 6V3M17.500 6V3M5.500 17V20M8.500 17V20M11.500 17V20" stroke="#2a4f82" stroke-width="1.300"/><rect x="13" y="13" width="10" height="10" rx="1.5" fill="#caa52e" stroke="#a8861c" stroke-width=".6"/><path d="M18.00 14.30L18.00 21.70M21.20 16.15L14.80 19.85M21.20 19.85L14.80 16.15" stroke="#fff" stroke-width="1.250"/><circle cx="18.0" cy="18.0" r="1.92" fill="#fff"/><circle cx="18.0" cy="18.0" r="0.93" fill="#caa52e"/></svg>
<div class="a" style="left:170px;top:94px;width:1px;height:23px;background:#dcdcdc;"></div>
<svg style="left:177.0px;top:94.0px" width="24" height="24" viewBox="0 0 24 24"><rect x="1.500" y="1.500" width="20" height="20" rx="2" fill="#8fb0d6" stroke="#3a5f90" stroke-width="1.200"/><path d="M5 4.500L9.500 17L17 4.500Z" fill="#c8d9ee" stroke="#1f3f6a" stroke-width="1.100"/><circle cx="5" cy="4.500" r="1.600" fill="#fff" stroke="#1f3f6a" stroke-width=".8"/><circle cx="17" cy="4.500" r="1.600" fill="#fff" stroke="#1f3f6a" stroke-width=".8"/><circle cx="9.500" cy="17" r="1.600" fill="#fff" stroke="#1f3f6a" stroke-width=".8"/><rect x="13.5" y="13.5" width="10" height="10" rx="1.5" fill="#caa52e" stroke="#a8861c" stroke-width=".6"/><path d="M18.50 14.80L18.50 22.20M21.70 16.65L15.30 20.35M21.70 20.35L15.30 16.65" stroke="#fff" stroke-width="1.250"/><circle cx="18.5" cy="18.5" r="1.92" fill="#fff"/><circle cx="18.5" cy="18.5" r="0.93" fill="#caa52e"/></svg>
<div class="a" style="left:208px;top:94px;width:1px;height:23px;background:#dcdcdc;"></div>
<div class="a" style="left:213px;top:89px;width:1px;height:33px;background:#d4d4d4;"></div>
<svg style="left:216.5px;top:91px" width="4" height="28" viewBox="0 0 4 28"><rect x="1.300" y="2.3" width="1.500" height="1.500" fill="#a2a2a2"/><rect x=".3" y="1.3" width="1.200" height="1.200" fill="#fdfdfd"/><rect x="1.300" y="6.3" width="1.500" height="1.500" fill="#a2a2a2"/><rect x=".3" y="5.3" width="1.200" height="1.200" fill="#fdfdfd"/><rect x="1.300" y="10.3" width="1.500" height="1.500" fill="#a2a2a2"/><rect x=".3" y="9.3" width="1.200" height="1.200" fill="#fdfdfd"/><rect x="1.300" y="14.3" width="1.500" height="1.500" fill="#a2a2a2"/><rect x=".3" y="13.3" width="1.200" height="1.200" fill="#fdfdfd"/><rect x="1.300" y="18.3" width="1.500" height="1.500" fill="#a2a2a2"/><rect x=".3" y="17.3" width="1.200" height="1.200" fill="#fdfdfd"/><rect x="1.300" y="22.3" width="1.500" height="1.500" fill="#a2a2a2"/><rect x=".3" y="21.3" width="1.200" height="1.200" fill="#fdfdfd"/><rect x="1.300" y="26.3" width="1.500" height="1.500" fill="#a2a2a2"/><rect x=".3" y="25.3" width="1.200" height="1.200" fill="#fdfdfd"/></svg>
<svg style="left:229.0px;top:94.0px" width="24" height="24" viewBox="0 0 24 24"><path d="M3 20L5 13L13 2L16 4L8 16ZM8 21L10 14L17 4L20 6L13 17Z" fill="#d6d6d6" stroke="#c4c4c4" stroke-width=".8"/><path d="M15 19H22L18.500 23Z" fill="#b0b0b0"/></svg>
<svg style="left:259.0px;top:94.0px" width="24" height="24" viewBox="0 0 24 24"><path d="M3 22L5 14.500L15 2L20 6L10 18.500Z" fill="#f0d23c" stroke="#8a7a2a" stroke-width=".9"/><path d="M3 22L5 14.500L10 18.500Z" fill="#e8d8b0" stroke="#8a7a2a" stroke-width=".7"/><path d="M3 22L4 18.500L6 20Z" fill="#333"/><path d="M8 11.500L13 15.500" stroke="#b89c10" stroke-width=".6"/><path d="M15 2L20 6L18.500 8L13.500 4Z" fill="#c9a73a" stroke="#8a7a2a" stroke-width=".6"/></svg>
<svg style="left:290.0px;top:94.0px" width="24" height="24" viewBox="0 0 24 24"><rect x="2.500" y="2.500" width="17" height="17" rx="2" fill="#d6d6d6" stroke="#c2c2c2" stroke-width="1"/><rect x="5.500" y="3.500" width="11" height="7" fill="#ececec"/><rect x="6.500" y="13" width="9" height="6" fill="#c4c4c4"/><path d="M11 22L13 16L21 8L23 10L16 19Z" fill="#dadada" stroke="#c4c4c4" stroke-width=".7"/></svg>
<svg style="left:321.0px;top:94.0px" width="24" height="24" viewBox="0 0 24 24"><path d="M1.500 6.500C1.500 2.500 6 .8 10 1.500C14 2.300 16 3 19 2.300C22 2.300 23 5 22.500 8C22 11 19 12.300 17 11.500C15 10.800 13.500 9.500 11.500 10.500C9 12 5 12.800 3 11C1.500 9.800 1.500 8 1.500 6.500Z" fill="#dadcda" stroke="#c2c4c2" stroke-width=".9"/><ellipse cx="7.500" cy="6" rx="4" ry="2.600" fill="#d2d4d2" stroke="#bcbebc" stroke-width=".7" transform="rotate(-8 7.500 6)"/><rect x="13" y="13" width="10.5" height="10.5" rx="1.5" fill="#cbc8bd" stroke="#c2bfb4" stroke-width=".6"/><path d="M18.25 14.37L18.25 22.13M21.61 16.31L14.89 20.19M21.61 20.19L14.89 16.31" stroke="#fff" stroke-width="1.250"/><circle cx="18.25" cy="18.25" r="2.02" fill="#fff"/><circle cx="18.25" cy="18.25" r="0.97" fill="#cbc8bd"/></svg>
<svg style="left:352.0px;top:94.0px" width="24" height="24" viewBox="0 0 24 24"><path d="M4 6H8V10H4ZM6 10L10 20M8 8H20M12 12L20 20M18 10L10 20" fill="none" stroke="#cacaca" stroke-width="1.600"/></svg>
<svg style="left:383px;top:103px" width="10" height="6" viewBox="0 0 10 6"><path d="M0.500 .5H9.500L5 5.500Z" fill="#7a7a7a"/></svg>
<svg style="left:399.0px;top:94.0px" width="24" height="24" viewBox="0 0 24 24"><path d="M2 5H20V9H2ZM2 10.500H20V14.500H2ZM2 16H20V20H2Z" fill="#d8d8d8" stroke="#c6c6c6" stroke-width=".6"/><path d="M10 21L12 15L20 4L23 6L15 17.500Z" fill="#e0e0e0" stroke="#c6c6c6" stroke-width=".8"/></svg>
<svg style="left:429.0px;top:94.0px" width="24" height="24" viewBox="0 0 24 24"><path d="M4 8H20L18.500 22H5.500Z" fill="#d8d8d8" stroke="#c4c4c4" stroke-width=".9"/><path d="M3 5.500H21V8H3ZM9 3H15V5.500H9Z" fill="#d0d0d0" stroke="#c4c4c4" stroke-width=".7"/><path d="M9 10.500V19.500M12 10.500V19.500M15 10.500V19.500" stroke="#c0c0c0" stroke-width="1.200"/></svg>
<svg style="left:460.0px;top:94.0px" width="24" height="24" viewBox="0 0 24 24"><path d="M3 4L16 15M21 4L8 15" stroke="#cfcfcf" stroke-width="1.800"/><circle cx="6.500" cy="18" r="3" fill="none" stroke="#cfcfcf" stroke-width="1.600"/><circle cx="17.500" cy="18" r="3" fill="none" stroke="#cfcfcf" stroke-width="1.600"/></svg>
<svg style="left:491.0px;top:94.0px" width="24" height="24" viewBox="0 0 24 24"><path d="M8.500 3.500H16L19.500 7V17.500H8.500Z" fill="#ececec" stroke="#cdcdcd" stroke-width=".9"/><path d="M4.500 7.500H12L15.500 11V21.500H4.500Z" fill="#f2f2f2" stroke="#cdcdcd" stroke-width=".9"/><path d="M6.500 13H13M6.500 15.500H13M6.500 18H13" stroke="#d6d6d6" stroke-width=".9"/></svg>
<svg style="left:522.0px;top:94.0px" width="24" height="24" viewBox="0 0 24 24"><rect x="3.500" y="4.500" width="17" height="17" rx="1.500" fill="#dcdcdc" stroke="#c8c8c8" stroke-width=".9"/><rect x="8" y="2.500" width="8" height="4" fill="#d0d0d0" stroke="#c4c4c4" stroke-width=".7"/><rect x="6.500" y="8.500" width="11" height="11" fill="#f2f2f2" stroke="#d0d0d0" stroke-width=".6"/><path d="M8.500 11.500H15.500M8.500 14H15.500M8.500 16.500H15.500" stroke="#d4d4d4" stroke-width=".9"/></svg>
<svg style="left:554.0px;top:94.0px" width="24" height="24" viewBox="0 0 24 24"><path d="M3 10L10 3.500V7.500C18 7.500 21 12 19 19C18 15 15 13 10 13V16.500Z" fill="#d4d4d4" stroke="#c6c6c6" stroke-width=".8" stroke-linejoin="round"/></svg>
<svg style="left:585.0px;top:94.0px" width="24" height="24" viewBox="0 0 24 24"><path d="M21 10L14 3.500V7.500C6 7.500 3 12 5 19C6 15 9 13 14 13V16.500Z" fill="#d4d4d4" stroke="#c6c6c6" stroke-width=".8" stroke-linejoin="round"/></svg>
<div class="a" style="left:614px;top:89px;width:1px;height:33px;background:#d4d4d4;"></div>
<svg style="left:617.5px;top:91px" width="4" height="28" viewBox="0 0 4 28"><rect x="1.300" y="2.3" width="1.500" height="1.500" fill="#a2a2a2"/><rect x=".3" y="1.3" width="1.200" height="1.200" fill="#fdfdfd"/><rect x="1.300" y="6.3" width="1.500" height="1.500" fill="#a2a2a2"/><rect x=".3" y="5.3" width="1.200" height="1.200" fill="#fdfdfd"/><rect x="1.300" y="10.3" width="1.500" height="1.500" fill="#a2a2a2"/><rect x=".3" y="9.3" width="1.200" height="1.200" fill="#fdfdfd"/><rect x="1.300" y="14.3" width="1.500" height="1.500" fill="#a2a2a2"/><rect x=".3" y="13.3" width="1.200" height="1.200" fill="#fdfdfd"/><rect x="1.300" y="18.3" width="1.500" height="1.500" fill="#a2a2a2"/><rect x=".3" y="17.3" width="1.200" height="1.200" fill="#fdfdfd"/><rect x="1.300" y="22.3" width="1.500" height="1.500" fill="#a2a2a2"/><rect x=".3" y="21.3" width="1.200" height="1.200" fill="#fdfdfd"/><rect x="1.300" y="26.3" width="1.500" height="1.500" fill="#a2a2a2"/><rect x=".3" y="25.3" width="1.200" height="1.200" fill="#fdfdfd"/></svg>
<svg style="left:629.0px;top:94.0px" width="24" height="24" viewBox="0 0 24 24"><g transform="translate(-.3 1.500)"><path d="M1.5 9L6 4.500H22V13.500H6Z" fill="#f3d33a" stroke="#b89a10" stroke-width=".9"/><text x="14" y="12" font-family="Liberation Sans,sans-serif" font-size="8.500" font-weight="bold" text-anchor="middle" fill="#222">abc</text></g></svg>
<svg style="left:660.0px;top:94.0px" width="24" height="24" viewBox="0 0 24 24"><circle cx="10" cy="9.500" r="7" fill="#2fae4a" stroke="#3f6f38" stroke-width=".6"/><path d="M10 9.500L4.500 5A7 7 0 0 1 15.500 5Z" fill="#f0d23c"/><path d="M10 9.500L15.500 5A7 7 0 0 1 14 15.300Z" fill="#c8282a"/><path d="M10 9.500L4.500 5M10 9.500L15.500 5M10 9.500L14 15.300" stroke="#6a5a20" stroke-width=".5"/><rect x="11" y="15.500" width="4" height="7" fill="#f0d23c" stroke="#a08a10" stroke-width=".5"/><rect x="15" y="12.500" width="3.500" height="10" fill="#2fae4a" stroke="#1f6f2a" stroke-width=".5"/><rect x="18.500" y="17.500" width="3.500" height="5" fill="#c8282a" stroke="#7a1a14" stroke-width=".5"/></svg>
<div class="a" style="left:692px;top:94px;width:1px;height:23px;background:#dcdcdc;"></div>
<svg style="left:699.0px;top:94.0px" width="24" height="24" viewBox="0 0 24 24"><g transform="translate(-.3 1.500)"><path d="M1.5 9L6 4.500H22V13.500H6Z" fill="#b7cfea" stroke="#4a77b0" stroke-width=".9"/><text x="11.5" y="12" font-family="Liberation Sans,sans-serif" font-size="8.500" font-weight="bold" text-anchor="middle" fill="#1f3f6a">ab</text><path d="M17.5 8.5V15.5" stroke="#e8e8e8" stroke-width="1.8"/><circle cx="18.5" cy="17.5" r="3.6" fill="#b01c24" stroke="#7a1015" stroke-width=".6"/></g></svg>
<svg style="left:729.0px;top:94.0px" width="24" height="24" viewBox="0 0 24 24"><g transform="translate(-.3 1.500)"><path d="M1.5 9L6 4.500H22V13.500H6Z" fill="#f8d4d4" stroke="#c8282a" stroke-width=".9"/><text x="14" y="12" font-family="Liberation Sans,sans-serif" font-size="8.500" font-weight="bold" text-anchor="middle" fill="#c8282a">abc</text></g></svg>
<div class="a" style="left:761px;top:94px;width:1px;height:23px;background:#dcdcdc;"></div>
<svg style="left:768.0px;top:94.0px" width="24" height="24" viewBox="0 0 24 24"><g transform="translate(-.3 1.500)"><path d="M1.5 9L6 4.500H22V13.500H6Z" fill="#f3d33a" stroke="#b89a10" stroke-width=".9"/><text x="11.5" y="12" font-family="Liberation Sans,sans-serif" font-size="8.500" font-weight="bold" text-anchor="middle" fill="#222">ab</text><path d="M17.5 8.5V15.5" stroke="#e8e8e8" stroke-width="1.8"/><circle cx="18.5" cy="17.5" r="3.6" fill="#b01c24" stroke="#7a1015" stroke-width=".6"/></g></svg>
<svg style="left:799.0px;top:94.0px" width="24" height="24" viewBox="0 0 24 24"><g transform="translate(-.3 1.500)"><path d="M1.5 9L6 4.500H22V13.500H6Z" fill="#f3d33a" stroke="#b89a10" stroke-width=".9"/><text x="14" y="12" font-family="Liberation Sans,sans-serif" font-size="8.500" font-weight="bold" text-anchor="middle" fill="#222">abc</text><path d="M8 18.500C11 14 18 14 21 18.500C18 22.500 11 22.500 8 18.500Z" fill="#fff" stroke="#555" stroke-width=".8"/><circle cx="14.500" cy="18.500" r="2.600" fill="#4b7bb5" stroke="#1f3f6a" stroke-width=".6"/><circle cx="14.500" cy="18.500" r="1" fill="#111"/></g></svg>
<svg style="left:830.0px;top:94.0px" width="24" height="24" viewBox="0 0 24 24"><g transform="translate(-.3 1.500)"><path d="M1.5 9L6 4.500H22V13.500H6Z" fill="#f3d33a" stroke="#b89a10" stroke-width=".9"/><text x="14" y="12" font-family="Liberation Sans,sans-serif" font-size="8.500" font-weight="bold" text-anchor="middle" fill="#222">abc</text><rect x="13" y="13" width="10" height="10" rx="2" fill="#2f5080"/><path d="M15 18H21M18.500 15.500L21 18L18.500 20.500" fill="none" stroke="#fff" stroke-width="1.600"/></g></svg>
<svg style="left:861.0px;top:94.0px" width="24" height="24" viewBox="0 0 24 24"><g transform="translate(-.3 1.500)"><path d="M1.5 9L6 4.500H22V13.500H6Z" fill="#f3d33a" stroke="#b89a10" stroke-width=".9"/><text x="14" y="12" font-family="Liberation Sans,sans-serif" font-size="8.500" font-weight="bold" text-anchor="middle" fill="#222">abc</text><rect x="13" y="13" width="10" height="10" rx="2" fill="#2f5080"/><path d="M15.500 19A2.800 2.800 0 1 0 18 15.500" fill="none" stroke="#fff" stroke-width="1.500"/><path d="M18.500 13.800L16.500 15.700L18.800 17.300" fill="none" stroke="#fff" stroke-width="1.200"/></g></svg>
<svg style="left:892.0px;top:94.0px" width="24" height="24" viewBox="0 0 24 24"><g transform="translate(-.3 1.500)"><path d="M1.5 9L6 4.500H22V13.500H6Z" fill="#f3d33a" stroke="#b89a10" stroke-width=".9"/><text x="14" y="12" font-family="Liberation Sans,sans-serif" font-size="8.500" font-weight="bold" text-anchor="middle" fill="#222">abc</text><rect x="13" y="13" width="10" height="10" rx="1.500" fill="#e6b333"/><path d="M15 21L16 18L20 14.500L21.500 16L18 20Z" fill="#fff"/></g></svg>
<div class="a" style="left:921px;top:89px;width:1px;height:33px;background:#d4d4d4;"></div>
<svg style="left:924.5px;top:91px" width="4" height="28" viewBox="0 0 4 28"><rect x="1.300" y="2.3" width="1.500" height="1.500" fill="#a2a2a2"/><rect x=".3" y="1.3" width="1.200" height="1.200" fill="#fdfdfd"/><rect x="1.300" y="6.3" width="1.500" height="1.500" fill="#a2a2a2"/><rect x=".3" y="5.3" width="1.200" height="1.200" fill="#fdfdfd"/><rect x="1.300" y="10.3" width="1.500" height="1.500" fill="#a2a2a2"/><rect x=".3" y="9.3" width="1.200" height="1.200" fill="#fdfdfd"/><rect x="1.300" y="14.3" width="1.500" height="1.500" fill="#a2a2a2"/><rect x=".3" y="13.3" width="1.200" height="1.200" fill="#fdfdfd"/><rect x="1.300" y="18.3" width="1.500" height="1.500" fill="#a2a2a2"/><rect x=".3" y="17.3" width="1.200" height="1.200" fill="#fdfdfd"/><rect x="1.300" y="22.3" width="1.500" height="1.500" fill="#a2a2a2"/><rect x=".3" y="21.3" width="1.200" height="1.200" fill="#fdfdfd"/><rect x="1.300" y="26.3" width="1.500" height="1.500" fill="#a2a2a2"/><rect x=".3" y="25.3" width="1.200" height="1.200" fill="#fdfdfd"/></svg>
<svg style="left:936.0px;top:94.0px" width="24" height="24" viewBox="0 0 24 24"><path d="M2.500 5V19C2.500 23 21.500 23 21.500 19V5" fill="#5b86bb" stroke="#2e4f7c" stroke-width="1"/><ellipse cx="12" cy="5" rx="9.500" ry="3.500" fill="#8fb0d6" stroke="#2e4f7c" stroke-width="1"/><path d="M2.500 9.700C2.500 13.500 21.500 13.500 21.500 9.700M2.500 14.400C2.500 18.200 21.500 18.200 21.500 14.400" fill="none" stroke="#2e4f7c" stroke-width="1"/></svg>
<div class="a" style="left:966px;top:89px;width:1px;height:33px;background:#d4d4d4;"></div>
<svg style="left:969.5px;top:91px" width="4" height="28" viewBox="0 0 4 28"><rect x="1.300" y="2.3" width="1.500" height="1.500" fill="#a2a2a2"/><rect x=".3" y="1.3" width="1.200" height="1.200" fill="#fdfdfd"/><rect x="1.300" y="6.3" width="1.500" height="1.500" fill="#a2a2a2"/><rect x=".3" y="5.3" width="1.200" height="1.200" fill="#fdfdfd"/><rect x="1.300" y="10.3" width="1.500" height="1.500" fill="#a2a2a2"/><rect x=".3" y="9.3" width="1.200" height="1.200" fill="#fdfdfd"/><rect x="1.300" y="14.3" width="1.500" height="1.500" fill="#a2a2a2"/><rect x=".3" y="13.3" width="1.200" height="1.200" fill="#fdfdfd"/><rect x="1.300" y="18.3" width="1.500" height="1.500" fill="#a2a2a2"/><rect x=".3" y="17.3" width="1.200" height="1.200" fill="#fdfdfd"/><rect x="1.300" y="22.3" width="1.500" height="1.500" fill="#a2a2a2"/><rect x=".3" y="21.3" width="1.200" height="1.200" fill="#fdfdfd"/><rect x="1.300" y="26.3" width="1.500" height="1.500" fill="#a2a2a2"/><rect x=".3" y="25.3" width="1.200" height="1.200" fill="#fdfdfd"/></svg>
<svg style="left:983.0px;top:94.0px" width="24" height="24" viewBox="0 0 24 24"><ellipse cx="11" cy="11" rx="10" ry="9.500" fill="#8fb0d6" stroke="#5b7fae" stroke-width="1"/><ellipse cx="11" cy="11" rx="4.500" ry="9.500" fill="none" stroke="#dfe9f5" stroke-width="1"/><path d="M1.500 8H20.500M1.500 14H20.500M11 1.500V20.500" stroke="#dfe9f5" stroke-width="1"/><path d="M4 6C7 4 8 8 6 10C4 12 3 9 4 6ZM13 5C17 4 18 8 16 10C14 11 12 8 13 5ZM9 14C12 13 13 17 11 18C9 18 8 16 9 14Z" fill="#5f9e62" opacity=".7"/><rect x="13" y="14" width="9" height="8" rx="1.500" fill="#3f7a48" stroke="#234a2a" stroke-width=".6"/><path d="M14.500 17H20.500L17.500 21Z" fill="#111"/></svg>
<svg style="left:1014.0px;top:94.0px" width="24" height="24" viewBox="0 0 24 24"><ellipse cx="11" cy="11" rx="10" ry="9.500" fill="#8fb0d6" stroke="#5b7fae" stroke-width="1"/><ellipse cx="11" cy="11" rx="4.500" ry="9.500" fill="none" stroke="#dfe9f5" stroke-width="1"/><path d="M1.500 8H20.500M1.500 14H20.500M11 1.500V20.500" stroke="#dfe9f5" stroke-width="1"/><path d="M4 6C7 4 8 8 6 10C4 12 3 9 4 6ZM13 5C17 4 18 8 16 10C14 11 12 8 13 5ZM9 14C12 13 13 17 11 18C9 18 8 16 9 14Z" fill="#5f9e62" opacity=".7"/><rect x="13" y="13.500" width="9" height="9" rx="1.500" fill="#5b9b50" stroke="#3f7a38" stroke-width=".6"/><circle cx="17" cy="17.500" r="2.200" fill="none" stroke="#fff" stroke-width="1.200"/><path d="M18.700 19.200L20.800 21.300" stroke="#fff" stroke-width="1.300"/></svg>
<svg style="left:1045.0px;top:94.0px" width="24" height="24" viewBox="0 0 24 24"><ellipse cx="11" cy="11" rx="10" ry="9.500" fill="#8fb0d6" stroke="#5b7fae" stroke-width="1"/><ellipse cx="11" cy="11" rx="4.500" ry="9.500" fill="none" stroke="#dfe9f5" stroke-width="1"/><path d="M1.500 8H20.500M1.500 14H20.500M11 1.500V20.500" stroke="#dfe9f5" stroke-width="1"/><path d="M4 6C7 4 8 8 6 10C4 12 3 9 4 6ZM13 5C17 4 18 8 16 10C14 11 12 8 13 5ZM9 14C12 13 13 17 11 18C9 18 8 16 9 14Z" fill="#5f9e62" opacity=".7"/><path d="M5 15H9.500V21.500C9.500 23 4 23.500 3.500 21ZM17 15H12.500V21.500C12.500 23 18 23.500 18.500 21Z" fill="#111"/><rect x="9" y="16" width="4" height="3" fill="#111"/><circle cx="6.500" cy="20.500" r="2.800" fill="#111"/><circle cx="15.500" cy="20.500" r="2.800" fill="#111"/></svg>
<div class="a" style="left:1073px;top:89px;width:1px;height:33px;background:#d4d4d4;"></div>
<svg style="left:1076.5px;top:91px" width="4" height="28" viewBox="0 0 4 28"><rect x="1.300" y="2.3" width="1.500" height="1.500" fill="#a2a2a2"/><rect x=".3" y="1.3" width="1.200" height="1.200" fill="#fdfdfd"/><rect x="1.300" y="6.3" width="1.500" height="1.500" fill="#a2a2a2"/><rect x=".3" y="5.3" width="1.200" height="1.200" fill="#fdfdfd"/><rect x="1.300" y="10.3" width="1.500" height="1.500" fill="#a2a2a2"/><rect x=".3" y="9.3" width="1.200" height="1.200" fill="#fdfdfd"/><rect x="1.300" y="14.3" width="1.500" height="1.500" fill="#a2a2a2"/><rect x=".3" y="13.3" width="1.200" height="1.200" fill="#fdfdfd"/><rect x="1.300" y="18.3" width="1.500" height="1.500" fill="#a2a2a2"/><rect x=".3" y="17.3" width="1.200" height="1.200" fill="#fdfdfd"/><rect x="1.300" y="22.3" width="1.500" height="1.500" fill="#a2a2a2"/><rect x=".3" y="21.3" width="1.200" height="1.200" fill="#fdfdfd"/><rect x="1.300" y="26.3" width="1.500" height="1.500" fill="#a2a2a2"/><rect x=".3" y="25.3" width="1.200" height="1.200" fill="#fdfdfd"/></svg>
<svg style="left:1089.0px;top:94.0px" width="24" height="24" viewBox="0 0 24 24"><path d="M11 2C7 2 7.500 4 7.500 6V8H12V9H5C2.500 9 2 11 2 13C2 15 3 16.500 5 16.500H7V13.500C7 11.500 8.500 10.500 10.500 10.500H14.500C16 10.500 17 9.500 17 8V5C17 3 15 2 11 2Z" fill="#3f74a8"/><circle cx="9.300" cy="4.500" r=".9" fill="#fff"/><path d="M12 22C16 22 15.500 20 15.500 18V16H11V15H18C20.500 15 21 13 21 11C21 9 20 7.500 18 7.500H17V10.500C17 12.500 15.500 13.500 13.500 13.500H9.500C8 13.500 7 14.500 7 16V19C7 21 8 22 12 22Z" fill="#f7cf46"/><text x="19" y="23.500" font-family="Liberation Sans,sans-serif" font-size="9" font-weight="bold" text-anchor="middle" fill="#222">&gt;</text></svg>
<svg style="left:1120.0px;top:94.0px" width="24" height="24" viewBox="0 0 24 24"><rect x="1" y="2" width="20" height="12" rx="3" fill="#3f6fa8"/><text x="11" y="11.500" font-family="Liberation Sans,sans-serif" font-size="8" font-weight="bold" text-anchor="middle" fill="#fff">KML</text><rect x="13.5" y="14" width="9" height="9" rx="2" fill="#5b9b50" stroke="#3f7a38" stroke-width=".6"/><path d="M15.3 18.5H20.7M18.0 15.8V21.2" stroke="#fff" stroke-width="1.8"/></svg>
<svg style="left:1151.0px;top:94.0px" width="24" height="24" viewBox="0 0 24 24"><rect x="1" y="2" width="20" height="12" rx="3" fill="#3f6fa8"/><text x="11" y="11.500" font-family="Liberation Sans,sans-serif" font-size="8" font-weight="bold" text-anchor="middle" fill="#fff">KMZ</text><rect x="13" y="14" width="10" height="9" rx="1.500" fill="#2f5080"/><path d="M15 16V21H18M17.500 18.500H21.500M20 17L21.500 18.500L20 20" fill="none" stroke="#fff" stroke-width="1.200"/></svg>
<svg style="left:1182.0px;top:94.0px" width="24" height="24" viewBox="0 0 24 24"><rect x="1" y="2" width="20" height="12" rx="3" fill="#3f6fa8"/><text x="11" y="11.500" font-family="Liberation Sans,sans-serif" font-size="6.800" font-weight="bold" text-anchor="middle" fill="#fff">HTML</text><rect x="13" y="13.5" width="9.5" height="9.5" rx="1.5" fill="#caa52e" stroke="#a8861c" stroke-width=".6"/><path d="M17.75 14.73L17.75 21.77M20.79 16.49L14.71 20.01M20.79 20.01L14.71 16.49" stroke="#fff" stroke-width="1.250"/><circle cx="17.75" cy="18.25" r="1.83" fill="#fff"/><circle cx="17.75" cy="18.25" r="0.88" fill="#caa52e"/></svg>
<svg style="left:1213.0px;top:94.0px" width="24" height="24" viewBox="0 0 24 24"><path d="M3 6C3 3 19 3 19 6V13C19 16 3 16 3 13Z" fill="#3f5f90" stroke="#22406a" stroke-width=".8"/><rect x="6" y="5.500" width="4" height="4" fill="#9fb9dc"/><rect x="10" y="9.500" width="4" height="4" fill="#9fb9dc"/><rect x="14" y="5.500" width="3.500" height="4" fill="#1c3154"/><rect x="6" y="9.500" width="4" height="4" fill="#1c3154"/><rect x="13.5" y="14" width="9.5" height="9.5" rx="2" fill="#5b9b50" stroke="#3f7a38" stroke-width=".6"/><path d="M15.4 18.75H21.1M18.25 15.9V21.6" stroke="#fff" stroke-width="1.8"/></svg>
<svg style="left:1244.0px;top:94.0px" width="24" height="24" viewBox="0 0 24 24"><rect x="2" y="2" width="4" height="4" rx=".8" fill="#9bc36a" stroke="#888" stroke-width=".3"/><rect x="7" y="2" width="4" height="4" rx=".8" fill="#9ac8d8" stroke="#888" stroke-width=".3"/><rect x="12" y="2" width="4" height="4" rx=".8" fill="#e8a06a" stroke="#888" stroke-width=".3"/><rect x="17" y="2" width="4" height="4" rx=".8" fill="#9ab0e8" stroke="#888" stroke-width=".3"/><rect x="2" y="7" width="4" height="4" rx=".8" fill="#d89ad0" stroke="#888" stroke-width=".3"/><rect x="7" y="7" width="4" height="4" rx=".8" fill="#9bc36a" stroke="#888" stroke-width=".3"/><rect x="12" y="7" width="4" height="4" rx=".8" fill="#9ac8d8" stroke="#888" stroke-width=".3"/><rect x="17" y="7" width="4" height="4" rx=".8" fill="#e8a06a" stroke="#888" stroke-width=".3"/><rect x="2" y="12" width="4" height="4" rx=".8" fill="#e89a9a" stroke="#888" stroke-width=".3"/><rect x="7" y="12" width="4" height="4" rx=".8" fill="#d89ad0" stroke="#888" stroke-width=".3"/><rect x="12" y="12" width="4" height="4" rx=".8" fill="#9bc36a" stroke="#888" stroke-width=".3"/><rect x="17" y="12" width="4" height="4" rx=".8" fill="#9ac8d8" stroke="#888" stroke-width=".3"/><rect x="2" y="17" width="4" height="4" rx=".8" fill="#b39ad8" stroke="#888" stroke-width=".3"/><rect x="7" y="17" width="4" height="4" rx=".8" fill="#e89a9a" stroke="#888" stroke-width=".3"/><rect x="12" y="17" width="4" height="4" rx=".8" fill="#d89ad0" stroke="#888" stroke-width=".3"/><rect x="17" y="17" width="4" height="4" rx=".8" fill="#9bc36a" stroke="#888" stroke-width=".3"/></svg>
<svg style="left:1275.0px;top:94.0px" width="24" height="24" viewBox="0 0 24 24"><path d="M2.500 2.500H20.500V20.500H2.500ZM8.500 2.500V20.500M14.500 2.500V20.500M2.500 8.500H20.500M2.500 14.500H20.500" fill="#f6f9fd" stroke="#7a9cc8" stroke-width="1.100"/><rect x="14" y="14" width="9.5" height="9.5" rx="1.5" fill="#caa52e" stroke="#a8861c" stroke-width=".6"/><path d="M18.75 15.23L18.75 22.27M21.79 16.99L15.71 20.51M21.79 20.51L15.71 16.99" stroke="#fff" stroke-width="1.250"/><circle cx="18.75" cy="18.75" r="1.83" fill="#fff"/><circle cx="18.75" cy="18.75" r="0.88" fill="#caa52e"/></svg>
<div class="a" style="left:1304px;top:89px;width:1px;height:33px;background:#d4d4d4;"></div>
<svg style="left:1307.5px;top:91px" width="4" height="28" viewBox="0 0 4 28"><rect x="1.300" y="2.3" width="1.500" height="1.500" fill="#a2a2a2"/><rect x=".3" y="1.3" width="1.200" height="1.200" fill="#fdfdfd"/><rect x="1.300" y="6.3" width="1.500" height="1.500" fill="#a2a2a2"/><rect x=".3" y="5.3" width="1.200" height="1.200" fill="#fdfdfd"/><rect x="1.300" y="10.3" width="1.500" height="1.500" fill="#a2a2a2"/><rect x=".3" y="9.3" width="1.200" height="1.200" fill="#fdfdfd"/><rect x="1.300" y="14.3" width="1.500" height="1.500" fill="#a2a2a2"/><rect x=".3" y="13.3" width="1.200" height="1.200" fill="#fdfdfd"/><rect x="1.300" y="18.3" width="1.500" height="1.500" fill="#a2a2a2"/><rect x=".3" y="17.3" width="1.200" height="1.200" fill="#fdfdfd"/><rect x="1.300" y="22.3" width="1.500" height="1.500" fill="#a2a2a2"/><rect x=".3" y="21.3" width="1.200" height="1.200" fill="#fdfdfd"/><rect x="1.300" y="26.3" width="1.500" height="1.500" fill="#a2a2a2"/><rect x=".3" y="25.3" width="1.200" height="1.200" fill="#fdfdfd"/></svg>
<svg style="left:1320.0px;top:94.0px" width="24" height="24" viewBox="0 0 24 24"><rect x="2.500" y="2.500" width="19" height="20" fill="#4f7cb5" stroke="#1f3050" stroke-width="1"/><rect x="2.500" y="2.500" width="4.500" height="20" fill="#1f3050"/><text x="14.500" y="17" font-family="Liberation Sans,sans-serif" font-size="13" text-anchor="middle" fill="#e8eef8">?</text></svg>
<div class="a" style="left:1350px;top:89px;width:1px;height:33px;background:#d4d4d4;"></div>
<svg style="left:1353.5px;top:91px" width="4" height="28" viewBox="0 0 4 28"><rect x="1.300" y="2.3" width="1.500" height="1.500" fill="#a2a2a2"/><rect x=".3" y="1.3" width="1.200" height="1.200" fill="#fdfdfd"/><rect x="1.300" y="6.3" width="1.500" height="1.500" fill="#a2a2a2"/><rect x=".3" y="5.3" width="1.200" height="1.200" fill="#fdfdfd"/><rect x="1.300" y="10.3" width="1.500" height="1.500" fill="#a2a2a2"/><rect x=".3" y="9.3" width="1.200" height="1.200" fill="#fdfdfd"/><rect x="1.300" y="14.3" width="1.500" height="1.500" fill="#a2a2a2"/><rect x=".3" y="13.3" width="1.200" height="1.200" fill="#fdfdfd"/><rect x="1.300" y="18.3" width="1.500" height="1.500" fill="#a2a2a2"/><rect x=".3" y="17.3" width="1.200" height="1.200" fill="#fdfdfd"/><rect x="1.300" y="22.3" width="1.500" height="1.500" fill="#a2a2a2"/><rect x=".3" y="21.3" width="1.200" height="1.200" fill="#fdfdfd"/><rect x="1.300" y="26.3" width="1.500" height="1.500" fill="#a2a2a2"/><rect x=".3" y="25.3" width="1.200" height="1.200" fill="#fdfdfd"/></svg>
<svg style="left:1365.0px;top:94.0px" width="24" height="24" viewBox="0 0 24 24"><path d="M4 4L17 3L22 9L11 16L6 21L9 11Z" fill="#6f97cb" stroke="#355f95" stroke-width="1"/><path d="M13 17L16 21L22 12" fill="none" stroke="#e0b020" stroke-width="2.200"/><g fill="#f0d860" stroke="#7a6a10" stroke-width=".7"><circle cx="4" cy="4" r="1.700"/><circle cx="17" cy="3" r="1.700"/><circle cx="22" cy="9" r="1.700"/><circle cx="6" cy="21" r="1.700"/><circle cx="9" cy="11" r="1.700"/></g></svg>
<svg style="left:2.5px;top:125px" width="4" height="28" viewBox="0 0 4 28"><rect x="1.300" y="2.3" width="1.500" height="1.500" fill="#a2a2a2"/><rect x=".3" y="1.3" width="1.200" height="1.200" fill="#fdfdfd"/><rect x="1.300" y="6.3" width="1.500" height="1.500" fill="#a2a2a2"/><rect x=".3" y="5.3" width="1.200" height="1.200" fill="#fdfdfd"/><rect x="1.300" y="10.3" width="1.500" height="1.500" fill="#a2a2a2"/><rect x=".3" y="9.3" width="1.200" height="1.200" fill="#fdfdfd"/><rect x="1.300" y="14.3" width="1.500" height="1.500" fill="#a2a2a2"/><rect x=".3" y="13.3" width="1.200" height="1.200" fill="#fdfdfd"/><rect x="1.300" y="18.3" width="1.500" height="1.500" fill="#a2a2a2"/><rect x=".3" y="17.3" width="1.200" height="1.200" fill="#fdfdfd"/><rect x="1.300" y="22.3" width="1.500" height="1.500" fill="#a2a2a2"/><rect x=".3" y="21.3" width="1.200" height="1.200" fill="#fdfdfd"/><rect x="1.300" y="26.3" width="1.500" height="1.500" fill="#a2a2a2"/><rect x=".3" y="25.3" width="1.200" height="1.200" fill="#fdfdfd"/></svg>
<svg style="left:15.0px;top:128.0px" width="24" height="24" viewBox="0 0 24 24"><path d="M4 20V8C4 5 6 4 9 4H18" fill="none" stroke="#cfcfcf" stroke-width="1.600" stroke-dasharray="2.500 2"/><rect x="2" y="18.500" width="4" height="4" fill="#e4e4e4" stroke="#cfcfcf" stroke-width=".8"/><rect x="17" y="2" width="4" height="4" fill="#e4e4e4" stroke="#cfcfcf" stroke-width=".8"/></svg>
<svg style="left:45.0px;top:128.0px" width="24" height="24" viewBox="0 0 24 24"><path d="M3 21.500V3L21.500 21.500Z" fill="#dcdcdc" stroke="#c6c6c6" stroke-width="1"/><path d="M7 17.500V11.500L13 17.500Z" fill="#f0f0f0" stroke="#c6c6c6" stroke-width=".8"/></svg>
<svg style="left:77.0px;top:128.0px" width="24" height="24" viewBox="0 0 24 24"><path d="M1.500 6.500C1.500 2.500 6 .8 10 1.500C14 2.300 16 3 19 2.300C22 2.300 23 5 22.500 8C22 11 19 12.300 17 11.500C15 10.800 13.500 9.500 11.500 10.500C9 12 5 12.800 3 11C1.500 9.800 1.500 8 1.500 6.500Z" fill="#dadcda" stroke="#c2c4c2" stroke-width=".9"/><rect x="13" y="13" width="10.500" height="10.500" rx="2" fill="#cdcdcd"/><path d="M15 18.200H21M18.500 15.500L21.200 18.200L18.500 21" fill="none" stroke="#f4f4f4" stroke-width="1.700"/></svg>
<svg style="left:107px;top:137px" width="10" height="6" viewBox="0 0 10 6"><path d="M0.500 .5H9.500L5 5.500Z" fill="#7a7a7a"/></svg>
<svg style="left:122.0px;top:128.0px" width="24" height="24" viewBox="0 0 24 24"><path d="M1.500 6.500C1.500 2.500 6 .8 10 1.500C14 2.300 16 3 19 2.300C22 2.300 23 5 22.500 8C22 11 19 12.300 17 11.500C15 10.800 13.500 9.500 11.500 10.500C9 12 5 12.800 3 11C1.500 9.800 1.500 8 1.500 6.500Z" fill="#dadcda" stroke="#c2c4c2" stroke-width=".9"/><rect x="13" y="13" width="10.500" height="10.500" rx="2" fill="#cdcdcd"/><path d="M15.800 19.500A2.800 2.800 0 1 0 18.200 15.800" fill="none" stroke="#f4f4f4" stroke-width="1.500"/></svg>
<svg style="left:153.0px;top:128.0px" width="24" height="24" viewBox="0 0 24 24"><path d="M1.500 6.500C1.500 2.500 6 .8 10 1.500C14 2.300 16 3 19 2.300C22 2.300 23 5 22.500 8C22 11 19 12.300 17 11.500C15 10.800 13.500 9.500 11.500 10.500C9 12 5 12.800 3 11C1.500 9.800 1.500 8 1.500 6.500Z" fill="#dadcda" stroke="#c2c4c2" stroke-width=".9"/><path d="M10 12L16 10L21 14L20 20L14 22L9 18Z" fill="#dadada" stroke="#c2c2c2" stroke-width=".8"/><path d="M8 8L15 16" stroke="#c2c2c2" stroke-width=".9"/></svg>
<svg style="left:185.0px;top:128.0px" width="24" height="24" viewBox="0 0 24 24"><path d="M1.500 6.500C1.500 2.500 6 .8 10 1.500C14 2.300 16 3 19 2.300C22 2.300 23 5 22.500 8C22 11 19 12.300 17 11.500C15 10.800 13.500 9.500 11.500 10.500C9 12 5 12.800 3 11C1.500 9.800 1.500 8 1.500 6.500Z" fill="#dadcda" stroke="#c2c4c2" stroke-width=".9"/><ellipse cx="7.500" cy="6" rx="4" ry="2.600" fill="#d2d4d2" stroke="#bcbebc" stroke-width=".7" transform="rotate(-8 7.500 6)"/><rect x="13" y="13" width="10.5" height="10.5" rx="1.5" fill="#cbc8bd" stroke="#c2bfb4" stroke-width=".6"/><path d="M18.25 14.37L18.25 22.13M21.61 16.31L14.89 20.19M21.61 20.19L14.89 16.31" stroke="#fff" stroke-width="1.250"/><circle cx="18.25" cy="18.25" r="2.02" fill="#fff"/><circle cx="18.25" cy="18.25" r="0.97" fill="#cbc8bd"/></svg>
<svg style="left:216.0px;top:128.0px" width="24" height="24" viewBox="0 0 24 24"><path d="M1.500 6.500C1.500 2.500 6 .8 10 1.500C14 2.300 16 3 19 2.300C22 2.300 23 5 22.500 8C22 11 19 12.300 17 11.500C15 10.800 13.500 9.500 11.500 10.500C9 12 5 12.800 3 11C1.500 9.800 1.500 8 1.500 6.500Z" fill="#dadcda" stroke="#c2c4c2" stroke-width=".9"/><path d="M7 12.500C9.500 11.500 11.500 13 11 16C10.500 19.500 7 22 3.500 21.500C1.500 21 2 19 3.500 17C5 15 5.500 13.500 7 12.500Z" fill="#dadcda" stroke="#c2c4c2" stroke-width=".8"/><rect x="13" y="13" width="10.5" height="10.5" rx="1.5" fill="#cbc8bd" stroke="#c2bfb4" stroke-width=".6"/><path d="M18.25 14.37L18.25 22.13M21.61 16.31L14.89 20.19M21.61 20.19L14.89 16.31" stroke="#fff" stroke-width="1.250"/><circle cx="18.25" cy="18.25" r="2.02" fill="#fff"/><circle cx="18.25" cy="18.25" r="0.97" fill="#cbc8bd"/></svg>
<svg style="left:247.0px;top:128.0px" width="24" height="24" viewBox="0 0 24 24"><path d="M1.500 6.500C1.500 2.500 6 .8 10 1.500C14 2.300 16 3 19 2.300C22 2.300 23 5 22.500 8C22 11 19 12.300 17 11.500C15 10.800 13.500 9.500 11.500 10.500C9 12 5 12.800 3 11C1.500 9.800 1.500 8 1.500 6.500Z" fill="#dadcda" stroke="#c2c4c2" stroke-width=".9"/><ellipse cx="7.500" cy="6" rx="4" ry="2.600" fill="#d2d4d2" stroke="#bcbebc" stroke-width=".7" transform="rotate(-8 7.500 6)"/><rect x="13" y="13" width="10.5" height="10.5" rx="1.5" fill="#cbc8bd" stroke="#c2bfb4" stroke-width=".6"/><path d="M18.25 14.37L18.25 22.13M21.61 16.31L14.89 20.19M21.61 20.19L14.89 16.31" stroke="#fff" stroke-width="1.250"/><circle cx="18.25" cy="18.25" r="2.02" fill="#fff"/><circle cx="18.25" cy="18.25" r="0.97" fill="#cbc8bd"/></svg>
<svg style="left:278.0px;top:128.0px" width="24" height="24" viewBox="0 0 24 24"><path d="M1.500 6.500C1.500 2.500 6 .8 10 1.500C14 2.300 16 3 19 2.300C22 2.300 23 5 22.500 8C22 11 19 12.300 17 11.500C15 10.800 13.500 9.500 11.500 10.500C9 12 5 12.800 3 11C1.500 9.800 1.500 8 1.500 6.500Z" fill="#dadcda" stroke="#c2c4c2" stroke-width=".9"/><ellipse cx="7.500" cy="6" rx="4" ry="2.600" fill="#f0f0f0" stroke="#bcbebc" stroke-width=".7" transform="rotate(-8 7.500 6)"/><rect x="13" y="13" width="10.5" height="10.5" rx="1.5" fill="#dcdcdc"/><path d="M15.625 15.625L20.875 20.875M20.875 15.625L15.625 20.875" stroke="#f4f4f4" stroke-width="1.6"/></svg>
<svg style="left:309.0px;top:128.0px" width="24" height="24" viewBox="0 0 24 24"><path d="M1.500 6.500C1.500 2.500 6 .8 10 1.500C14 2.300 16 3 19 2.300C22 2.300 23 5 22.500 8C22 11 19 12.300 17 11.500C15 10.800 13.500 9.500 11.500 10.500C9 12 5 12.800 3 11C1.500 9.800 1.500 8 1.500 6.500Z" fill="#dadcda" stroke="#c2c4c2" stroke-width=".9"/><path d="M7 12.500C9.500 11.500 11.500 13 11 16C10.500 19.500 7 22 3.500 21.500C1.500 21 2 19 3.500 17C5 15 5.500 13.500 7 12.500Z" fill="#dadcda" stroke="#c2c4c2" stroke-width=".8"/><rect x="13" y="13" width="10.5" height="10.5" rx="1.5" fill="#dcdcdc"/><path d="M15.625 15.625L20.875 20.875M20.875 15.625L15.625 20.875" stroke="#f4f4f4" stroke-width="1.6"/></svg>
<svg style="left:340.0px;top:128.0px" width="24" height="24" viewBox="0 0 24 24"><path d="M2 6C4 1.500 10 2 13 3.500C16 5 21 2.500 22.500 6.500C23 11 19 11 16 11C12 11 13 19 8.500 21C4 21.500 2.500 16 3 12Z" fill="#d6d8d6" stroke="#c2c4c2" stroke-width=".9"/></svg>
<svg style="left:371.0px;top:128.0px" width="24" height="24" viewBox="0 0 24 24"><path d="M4 19C1 16 8 11 11 8C14 5 19 2 21 5C23 8 18 10 16 13C13 17 8 22 4 19Z" fill="#d6d8d6" stroke="#babcba" stroke-width=".9"/><path d="M5.500 17.500C4.500 15.500 9.500 12 12 9.500C14 7.500 18 4.500 19.500 6C20.500 8 17 9.500 14.500 12.500C12 15.500 8 19 5.500 17.500Z" fill="#e0e2e0" stroke="#c2c4c2" stroke-width=".7"/></svg>
<svg style="left:402.0px;top:128.0px" width="24" height="24" viewBox="0 0 24 24"><path d="M3 3L9 16L16 5H21" fill="none" stroke="#cfcfcf" stroke-width="1.200"/><circle cx="3" cy="3" r="1.600" fill="#eee" stroke="#cfcfcf" stroke-width=".8"/><rect x="19" y="3" width="3.500" height="3.500" fill="#eee" stroke="#cfcfcf" stroke-width=".8"/><rect x="12" y="12" width="10.500" height="10.500" rx="2" fill="#d0d0d0"/><circle cx="17.200" cy="17.200" r="2.800" fill="none" stroke="#f4f4f4" stroke-width="1.400"/></svg>
<svg style="left:433.0px;top:128.0px" width="24" height="24" viewBox="0 0 24 24"><path d="M12 1V22M2 12H22" stroke="#d0d0d0" stroke-width="1.200"/><rect x="9.500" y="9.500" width="5" height="5" fill="#eee" stroke="#c8c8c8" stroke-width=".9"/><rect x="16" y="3" width="5" height="5" fill="#e4e4e4" stroke="#c8c8c8" stroke-width=".9"/><rect x="3" y="16" width="5" height="5" fill="#e4e4e4" stroke="#c8c8c8" stroke-width=".9"/></svg>
<svg style="left:464.0px;top:128.0px" width="24" height="24" viewBox="0 0 24 24"><circle cx="7" cy="6" r="4.500" fill="#d6d6d6" stroke="#c4c4c4" stroke-width=".7"/><circle cx="16" cy="6" r="4.500" fill="#d6d6d6" stroke="#c4c4c4" stroke-width=".7"/><path d="M8 4L15 17M15 4L8 17" stroke="#c4c4c4" stroke-width="1.700"/><circle cx="7" cy="19.500" r="2.400" fill="none" stroke="#c4c4c4" stroke-width="1.400"/><circle cx="16" cy="19.500" r="2.400" fill="none" stroke="#c4c4c4" stroke-width="1.400"/></svg>
<svg style="left:495.0px;top:128.0px" width="24" height="24" viewBox="0 0 24 24"><circle cx="7" cy="6" r="4.500" fill="#d6d6d6" stroke="#c4c4c4" stroke-width=".7"/><circle cx="16" cy="6" r="4.500" fill="#d6d6d6" stroke="#c4c4c4" stroke-width=".7"/><path d="M8 4L15 17M15 4L8 17" stroke="#c4c4c4" stroke-width="1.700"/><circle cx="7" cy="19.500" r="2.400" fill="none" stroke="#c4c4c4" stroke-width="1.400"/><circle cx="16" cy="19.500" r="2.400" fill="none" stroke="#c4c4c4" stroke-width="1.400"/></svg>
<svg style="left:526.0px;top:128.0px" width="24" height="24" viewBox="0 0 24 24"><path d="M3 7C3 3 9 3 11 5C13 3 20 3 20 7C20 11 14 11 11 10C8 11 3 11 3 7Z" fill="#d6d6d6" stroke="#c4c4c4" stroke-width=".8"/><path d="M8 10C8 15 10 18 14 21" fill="none" stroke="#c8c8c8" stroke-width="1.300"/></svg>
<svg style="left:557.0px;top:128.0px" width="24" height="24" viewBox="0 0 24 24"><path d="M3 5H21M3 9.500H21M3 14H21M3 18.500H21" stroke="#cfcfcf" stroke-width="1.100"/><path d="M12 3V21" stroke="#d6d6d6" stroke-width="1"/><path d="M9 7L12 5L15 7M9 16.500L12 18.500L15 16.500" fill="none" stroke="#cfcfcf" stroke-width="1"/></svg>
<svg style="left:588.0px;top:128.0px" width="24" height="24" viewBox="0 0 24 24"><path d="M10 3L20 9L10 14Z" fill="#e8e8e8" stroke="#cdcdcd" stroke-width="1"/><path d="M10 14L6 22H15Z" fill="#efefef" stroke="#d2d2d2" stroke-width="1"/><path d="M6 5C2 8 2 13 5 16" fill="none" stroke="#cdcdcd" stroke-width="1.300"/></svg>
<svg style="left:618px;top:137px" width="10" height="6" viewBox="0 0 10 6"><path d="M0.500 .5H9.500L5 5.500Z" fill="#7a7a7a"/></svg>
<div class="a" style="left:632px;top:123px;width:1px;height:33px;background:#d4d4d4;"></div>
<svg style="left:635.5px;top:125px" width="4" height="28" viewBox="0 0 4 28"><rect x="1.300" y="2.3" width="1.500" height="1.500" fill="#a2a2a2"/><rect x=".3" y="1.3" width="1.200" height="1.200" fill="#fdfdfd"/><rect x="1.300" y="6.3" width="1.500" height="1.500" fill="#a2a2a2"/><rect x=".3" y="5.3" width="1.200" height="1.200" fill="#fdfdfd"/><rect x="1.300" y="10.3" width="1.500" height="1.500" fill="#a2a2a2"/><rect x=".3" y="9.3" width="1.200" height="1.200" fill="#fdfdfd"/><rect x="1.300" y="14.3" width="1.500" height="1.500" fill="#a2a2a2"/><rect x=".3" y="13.3" width="1.200" height="1.200" fill="#fdfdfd"/><rect x="1.300" y="18.3" width="1.500" height="1.500" fill="#a2a2a2"/><rect x=".3" y="17.3" width="1.200" height="1.200" fill="#fdfdfd"/><rect x="1.300" y="22.3" width="1.500" height="1.500" fill="#a2a2a2"/><rect x=".3" y="21.3" width="1.200" height="1.200" fill="#fdfdfd"/><rect x="1.300" y="26.3" width="1.500" height="1.500" fill="#a2a2a2"/><rect x=".3" y="25.3" width="1.200" height="1.200" fill="#fdfdfd"/></svg>
<div class="a" style="left:646px;top:125px;width:31px;height:29px;background:#cce4f7;border:1px solid #99d1ff;box-sizing:border-box;"></div><svg style="left:649.0px;top:128.0px" width="24" height="24" viewBox="0 0 24 24"><g transform="rotate(-40 12 13)"><path d="M5 10.500C2 15 4 20 9.500 21.500C15 22.500 20.500 18 19.500 11L15 12.500C15.500 15.500 13 17.500 10.500 17C8 16.500 7 14 8.500 12Z" fill="#d81e1e" stroke="#8a0e0e" stroke-width=".9" stroke-linejoin="round"/><path d="M5 10.500L8.500 12L10 9.500L6.500 8ZM15 12.500L19.500 11L19 8L14.500 9.500Z" fill="#f4f4f4" stroke="#777" stroke-width=".8" stroke-linejoin="round"/></g></svg>
<svg style="left:680.0px;top:128.0px" width="24" height="24" viewBox="0 0 24 24"><path d="M4 3V20M4 8H12M4 14H10M12 8L18 3M12 8L16 13" fill="none" stroke="#7ab06a" stroke-width="1.500"/><g fill="#c8dcc0" stroke="#6f9f62" stroke-width=".8"><rect x="2.500" y="1.500" width="3" height="3"/><rect x="10.500" y="6.500" width="3" height="3"/><rect x="16.500" y="1.500" width="3" height="3"/><rect x="14.500" y="11.500" width="3" height="3"/><rect x="8.500" y="12.500" width="3" height="3"/></g><path d="M15 19H22L18.500 23Z" fill="#111"/></svg>
<div class="a" style="left:708px;top:125px;width:31px;height:29px;background:#cce4f7;border:1px solid #99d1ff;box-sizing:border-box;"></div><svg style="left:711.0px;top:128.0px" width="24" height="24" viewBox="0 0 24 24"><path d="M4 4L11 19L19 4" fill="none" stroke="#7cc07c" stroke-width="1.600"/><path d="M15 19H22L18.500 23Z" fill="#111"/></svg>
<div class="a" style="left:738px;top:129px;width:86px;height:23px;background:#fff;border:1px solid #7a7a7a;box-sizing:border-box;"></div>
<div class="t dj" style="left:741px;top:134.500px;font-size:13px;">20</div>
<svg style="left:808px;top:130px" width="15" height="21" viewBox="0 0 15 21"><rect x=".5" y=".5" width="14" height="9.500" fill="#f0f0f0" stroke="#adadad"/><rect x=".5" y="10.500" width="14" height="10" fill="#f0f0f0" stroke="#adadad"/><path d="M4 7.500L7.500 3.500L11 7.500ZM4 13.500L7.500 17.500L11 13.500Z" fill="#111"/></svg>
<div class="a" style="left:826px;top:129px;width:107px;height:23px;background:#e1e1e1;border:1px solid #adadad;box-sizing:border-box;"></div>
<div class="t dj" style="left:830px;top:134px;font-size:13px;">px</div>
<svg style="left:914px;top:136px" width="12" height="8" viewBox="0 0 12 8"><path d="M1 1.500L6 6.500L11 1.500" fill="none" stroke="#333" stroke-width="1.100"/></svg>
<div class="a" style="left:932px;top:125px;width:31px;height:29px;background:#cce4f7;border:1px solid #99d1ff;box-sizing:border-box;"></div><svg style="left:935.0px;top:128.0px" width="24" height="24" viewBox="0 0 24 24"><path d="M12 13V22M12 13L3 8M12 13L21 9" fill="none" stroke="#7cc07c" stroke-width="1.700"/><path d="M10 2L11 7" stroke="#7cc07c" stroke-width="1.500"/><rect x="9.800" y="10.800" width="4.400" height="4.400" fill="#d8d8d8" stroke="#8a8a8a" stroke-width=".9"/></svg>
<svg style="left:966.0px;top:128.0px" width="24" height="24" viewBox="0 0 24 24"><path d="M3 9C3 4 9 3 12 5C15 3 21 5 19 10C18 13 13 13 10 12C6 13 3 12 3 9Z" fill="#d0d0d0" stroke="#9a9a9a" stroke-width=".8"/><circle cx="7.500" cy="7.500" r="4.500" fill="#d81e1e"/><path d="M6 6.500L9 8L7 9Z" fill="#fff"/><path d="M7 12L12 21L17 18L12 10Z" fill="#a8d09a" stroke="#4f7f42" stroke-width=".8"/><path d="M11 9L17 17" stroke="#caa23a" stroke-width="1.500"/><path d="M15 19H22L18.500 23Z" fill="#111"/></svg>
<div class="a" style="left:994px;top:125px;width:31px;height:29px;background:#cce4f7;border:1px solid #99d1ff;box-sizing:border-box;"></div><svg style="left:997.0px;top:128.0px" width="24" height="24" viewBox="0 0 24 24"><path d="M3 3L21 21M21 3L3 21" stroke="#7cc07c" stroke-width="1.700"/><rect x="9.800" y="9.800" width="4.400" height="4.400" fill="#d8d8d8" stroke="#8a8a8a" stroke-width=".9"/></svg>
<svg style="left:1028.0px;top:128.0px" width="24" height="24" viewBox="0 0 24 24"><path d="M2 21L22 5" stroke="#7cc07c" stroke-width="1.600"/><path d="M3 3L13 9L9 11L20 19L8 14.500L12 12.500Z" fill="#f5d33a" stroke="#c89a10" stroke-width=".7" stroke-linejoin="round"/></svg>
<svg style="left:1058px;top:137px" width="10" height="6" viewBox="0 0 10 6"><path d="M0.500 .5H9.500L5 5.500Z" fill="#111"/></svg>
<svg style="left:1073.0px;top:128.0px" width="24" height="24" viewBox="0 0 24 24"><path d="M3 20L5 6L14 16L20 8" fill="none" stroke="#7cc07c" stroke-width="1.600"/><circle cx="5" cy="6" r="2" fill="#d8d8d8" stroke="#7a9a72" stroke-width=".8"/><circle cx="10" cy="18" r="2" fill="#d8d8d8" stroke="#7a9a72" stroke-width=".8"/><path d="M13 3L20 12L22 10.500L15 1.500Z" fill="#f0d23c" stroke="#8a7a2a" stroke-width=".8"/></svg>
<svg style="left:2.5px;top:161px" width="4" height="40" viewBox="0 0 4 40"><rect x="1.300" y="2.3" width="1.500" height="1.500" fill="#a2a2a2"/><rect x=".3" y="1.3" width="1.200" height="1.200" fill="#fdfdfd"/><rect x="1.300" y="6.3" width="1.500" height="1.500" fill="#a2a2a2"/><rect x=".3" y="5.3" width="1.200" height="1.200" fill="#fdfdfd"/><rect x="1.300" y="10.3" width="1.500" height="1.500" fill="#a2a2a2"/><rect x=".3" y="9.3" width="1.200" height="1.200" fill="#fdfdfd"/><rect x="1.300" y="14.3" width="1.500" height="1.500" fill="#a2a2a2"/><rect x=".3" y="13.3" width="1.200" height="1.200" fill="#fdfdfd"/><rect x="1.300" y="18.3" width="1.500" height="1.500" fill="#a2a2a2"/><rect x=".3" y="17.3" width="1.200" height="1.200" fill="#fdfdfd"/><rect x="1.300" y="22.3" width="1.500" height="1.500" fill="#a2a2a2"/><rect x=".3" y="21.3" width="1.200" height="1.200" fill="#fdfdfd"/><rect x="1.300" y="26.3" width="1.500" height="1.500" fill="#a2a2a2"/><rect x=".3" y="25.3" width="1.200" height="1.200" fill="#fdfdfd"/><rect x="1.300" y="30.3" width="1.500" height="1.500" fill="#a2a2a2"/><rect x=".3" y="29.3" width="1.200" height="1.200" fill="#fdfdfd"/><rect x="1.300" y="34.3" width="1.500" height="1.500" fill="#a2a2a2"/><rect x=".3" y="33.3" width="1.200" height="1.200" fill="#fdfdfd"/><rect x="1.300" y="38.3" width="1.500" height="1.500" fill="#a2a2a2"/><rect x=".3" y="37.3" width="1.200" height="1.200" fill="#fdfdfd"/></svg>
<svg style="left:14.5px;top:169.0px" width="27" height="27" viewBox="0 0 24 24"><rect x="2.500" y="2.500" width="16" height="15" fill="none" stroke="#222" stroke-width="1" stroke-dasharray="2 1.500"/><rect x="3.500" y="3.500" width="10" height="11" fill="#f0d62a" stroke="#c8aa10" stroke-width=".6"/><path d="M9 8.500L10 20.500L12.800 17.800L15 22.500L17.200 21.500L15 17L19 16.500Z" fill="#fff" stroke="#222" stroke-width=".9" stroke-linejoin="round"/></svg>
<svg style="left:43px;top:180px" width="10" height="6" viewBox="0 0 10 6"><path d="M0.500 .5H9.500L5 5.500Z" fill="#111"/></svg>
<div class="a" style="left:182px;top:157px;width:1px;height:13px;background:#d4d4d4;"></div>
<div class="a" style="left:259px;top:157px;width:1px;height:13px;background:#d4d4d4;"></div>
<div class="a" style="left:335px;top:157px;width:1px;height:13px;background:#d4d4d4;"></div>
<svg style="left:184.5px;top:157px" width="4" height="10" viewBox="0 0 4 10"><rect x="1.300" y="2.3" width="1.500" height="1.500" fill="#a2a2a2"/><rect x=".3" y="1.3" width="1.200" height="1.200" fill="#fdfdfd"/><rect x="1.300" y="6.3" width="1.500" height="1.500" fill="#a2a2a2"/><rect x=".3" y="5.3" width="1.200" height="1.200" fill="#fdfdfd"/></svg>
<svg style="left:261.5px;top:157px" width="4" height="10" viewBox="0 0 4 10"><rect x="1.300" y="2.3" width="1.500" height="1.500" fill="#a2a2a2"/><rect x=".3" y="1.3" width="1.200" height="1.200" fill="#fdfdfd"/><rect x="1.300" y="6.3" width="1.500" height="1.500" fill="#a2a2a2"/><rect x=".3" y="5.3" width="1.200" height="1.200" fill="#fdfdfd"/></svg>
<svg style="left:337.5px;top:157px" width="4" height="10" viewBox="0 0 4 10"><rect x="1.300" y="2.3" width="1.500" height="1.500" fill="#a2a2a2"/><rect x=".3" y="1.3" width="1.200" height="1.200" fill="#fdfdfd"/><rect x="1.300" y="6.3" width="1.500" height="1.500" fill="#a2a2a2"/><rect x=".3" y="5.3" width="1.200" height="1.200" fill="#fdfdfd"/></svg>
<div class="t dj" style="left:418px;top:175.500px;font-size:13px;">Band:</div>
<div class="a" style="left:451px;top:171px;width:37px;height:22px;background:#cccccc;border:1px solid #bfbfbf;box-sizing:border-box;"></div>
<div class="t dj" style="left:455px;top:176px;font-size:13px;color:#838383;">1</div>
<svg style="left:471px;top:179px" width="12" height="8" viewBox="0 0 12 8"><path d="M1.500 1.500L6 6L10.500 1.500" fill="none" stroke="#a0a0a0" stroke-width="1.100"/></svg>
<div class="a" style="left:499px;top:170px;width:50px;height:24px;background:#f0f0f0;border:1px solid #c8c8c8;box-sizing:border-box;"></div>
<div class="t dj" style="left:502.500px;top:176px;font-size:13px;color:#7a7a7a;">0,0000</div>
<svg style="left:563.0px;top:170.0px" width="24" height="24" viewBox="0 0 24 24"><rect x="0" y="0" width="24" height="24" fill="#e8e8e8"/><rect x="0" y="0" width="6" height="6" fill="#dcdcdc"/><rect x="12" y="0" width="6" height="6" fill="#dcdcdc"/><rect x="6" y="6" width="6" height="6" fill="#dcdcdc"/><rect x="18" y="6" width="6" height="6" fill="#dcdcdc"/><rect x="0" y="12" width="6" height="6" fill="#dcdcdc"/><rect x="12" y="12" width="6" height="6" fill="#dcdcdc"/><rect x="6" y="18" width="6" height="6" fill="#dcdcdc"/><rect x="18" y="18" width="6" height="6" fill="#dcdcdc"/><path d="M3 21L5 15L17 3L21 7L9 19Z" fill="#ececec" stroke="#c4c4c4" stroke-width=".9"/></svg>
<svg style="left:594.0px;top:170.0px" width="24" height="24" viewBox="0 0 24 24"><rect x="0" y="0" width="24" height="24" fill="#e8e8e8"/><rect x="0" y="0" width="6" height="6" fill="#dcdcdc"/><rect x="12" y="0" width="6" height="6" fill="#dcdcdc"/><rect x="6" y="6" width="6" height="6" fill="#dcdcdc"/><rect x="18" y="6" width="6" height="6" fill="#dcdcdc"/><rect x="0" y="12" width="6" height="6" fill="#dcdcdc"/><rect x="12" y="12" width="6" height="6" fill="#dcdcdc"/><rect x="6" y="18" width="6" height="6" fill="#dcdcdc"/><rect x="18" y="18" width="6" height="6" fill="#dcdcdc"/><path d="M6 8L16 3L21 13L11 18Z" fill="#e8e8e8" stroke="#b8b8b8" stroke-width=".9"/><path d="M3 14C4 11 7 10 8 12L9 19L5 20Z" fill="#d4d4d4" stroke="#c0c0c0" stroke-width=".7"/></svg>
<svg style="left:625.0px;top:170.0px" width="24" height="24" viewBox="0 0 24 24"><rect x="0" y="0" width="24" height="24" fill="#e8e8e8"/><rect x="0" y="0" width="6" height="6" fill="#dcdcdc"/><rect x="12" y="0" width="6" height="6" fill="#dcdcdc"/><rect x="6" y="6" width="6" height="6" fill="#dcdcdc"/><rect x="18" y="6" width="6" height="6" fill="#dcdcdc"/><rect x="0" y="12" width="6" height="6" fill="#dcdcdc"/><rect x="12" y="12" width="6" height="6" fill="#dcdcdc"/><rect x="6" y="18" width="6" height="6" fill="#dcdcdc"/><rect x="18" y="18" width="6" height="6" fill="#dcdcdc"/><path d="M9 17L17 4L22 7L14 20Z" fill="#d4d4d4" stroke="#b4b4b4" stroke-width=".9"/><path d="M9 17L14 20L12 22L7 19Z" fill="#f2f2f2" stroke="#c0c0c0" stroke-width=".8"/><path d="M2 20L6 12" stroke="#fff" stroke-width="1.200" stroke-dasharray="2 1.500"/></svg>
<svg style="left:656.0px;top:170.0px" width="24" height="24" viewBox="0 0 24 24"><rect x="0" y="0" width="24" height="24" fill="#e8e8e8"/><rect x="0" y="0" width="6" height="6" fill="#dcdcdc"/><rect x="12" y="0" width="6" height="6" fill="#dcdcdc"/><rect x="6" y="6" width="6" height="6" fill="#dcdcdc"/><rect x="18" y="6" width="6" height="6" fill="#dcdcdc"/><rect x="0" y="12" width="6" height="6" fill="#dcdcdc"/><rect x="12" y="12" width="6" height="6" fill="#dcdcdc"/><rect x="6" y="18" width="6" height="6" fill="#dcdcdc"/><rect x="18" y="18" width="6" height="6" fill="#dcdcdc"/><text x="12" y="19" font-family="Liberation Serif,serif" font-size="20" text-anchor="middle" fill="#c6c6c6">ε</text></svg>
<svg style="left:687.0px;top:170.0px" width="24" height="24" viewBox="0 0 24 24"><rect x="0" y="0" width="24" height="24" fill="#e8e8e8"/><rect x="0" y="0" width="6" height="6" fill="#dcdcdc"/><rect x="12" y="0" width="6" height="6" fill="#dcdcdc"/><rect x="6" y="6" width="6" height="6" fill="#dcdcdc"/><rect x="18" y="6" width="6" height="6" fill="#dcdcdc"/><rect x="0" y="12" width="6" height="6" fill="#dcdcdc"/><rect x="12" y="12" width="6" height="6" fill="#dcdcdc"/><rect x="6" y="18" width="6" height="6" fill="#dcdcdc"/><rect x="18" y="18" width="6" height="6" fill="#dcdcdc"/><path d="M2 15C5 2 9 2 12 12C15 22 19 22 22 9" fill="none" stroke="#c2bcd2" stroke-width="1.400"/><path d="M2 12C6 8 10 16 14 13C18 10 20 14 22 12" fill="none" stroke="#dac6b6" stroke-width="1.200"/></svg>
<svg style="left:718.0px;top:170.0px" width="24" height="24" viewBox="0 0 24 24"><rect x="0" y="0" width="24" height="24" fill="#e8e8e8"/><rect x="0" y="0" width="6" height="6" fill="#dcdcdc"/><rect x="12" y="0" width="6" height="6" fill="#dcdcdc"/><rect x="6" y="6" width="6" height="6" fill="#dcdcdc"/><rect x="18" y="6" width="6" height="6" fill="#dcdcdc"/><rect x="0" y="12" width="6" height="6" fill="#dcdcdc"/><rect x="12" y="12" width="6" height="6" fill="#dcdcdc"/><rect x="6" y="18" width="6" height="6" fill="#dcdcdc"/><rect x="18" y="18" width="6" height="6" fill="#dcdcdc"/><path d="M3 10L10 3.500V7.500C18 7.500 21 12 19 19C18 15 15 13 10 13V16.500Z" fill="#e8e8e8" stroke="#c8c8c8" stroke-width=".8" stroke-linejoin="round"/></svg>
<svg style="left:749.0px;top:170.0px" width="24" height="24" viewBox="0 0 24 24"><rect x="0" y="0" width="24" height="24" fill="#e8e8e8"/><rect x="0" y="0" width="6" height="6" fill="#dcdcdc"/><rect x="12" y="0" width="6" height="6" fill="#dcdcdc"/><rect x="6" y="6" width="6" height="6" fill="#dcdcdc"/><rect x="18" y="6" width="6" height="6" fill="#dcdcdc"/><rect x="0" y="12" width="6" height="6" fill="#dcdcdc"/><rect x="12" y="12" width="6" height="6" fill="#dcdcdc"/><rect x="6" y="18" width="6" height="6" fill="#dcdcdc"/><rect x="18" y="18" width="6" height="6" fill="#dcdcdc"/><path d="M21 10L14 3.500V7.500C6 7.500 3 12 5 19C6 15 9 13 14 13V16.500Z" fill="#e8e8e8" stroke="#c8c8c8" stroke-width=".8" stroke-linejoin="round"/></svg>
<svg style="left:780.0px;top:170.0px" width="24" height="24" viewBox="0 0 24 24"><rect x="0" y="0" width="24" height="24" fill="#e8e8e8"/><rect x="0" y="0" width="6" height="6" fill="#dcdcdc"/><rect x="12" y="0" width="6" height="6" fill="#dcdcdc"/><rect x="6" y="6" width="6" height="6" fill="#dcdcdc"/><rect x="18" y="6" width="6" height="6" fill="#dcdcdc"/><rect x="0" y="12" width="6" height="6" fill="#dcdcdc"/><rect x="12" y="12" width="6" height="6" fill="#dcdcdc"/><rect x="6" y="18" width="6" height="6" fill="#dcdcdc"/><rect x="18" y="18" width="6" height="6" fill="#dcdcdc"/><path d="M4 5L19 20M19 5L5 19" stroke="#c4c4c4" stroke-width="3.500" stroke-linecap="round"/><path d="M4 5L19 20" stroke="#dcdcdc" stroke-width="1.600" stroke-linecap="round"/></svg>
<svg style="left:811.0px;top:170.0px" width="24" height="24" viewBox="0 0 24 24"><rect x="0" y="0" width="24" height="24" fill="#8c949c"/><path d="M0 24L6 8L12 14L16 4L24 24Z" fill="#6a727a"/><path d="M3 0L8 10L0 12Z" fill="#5a626a"/><path d="M11 12L20 3" stroke="#e8e8e8" stroke-width="3" stroke-linecap="round"/><path d="M5 21L12 13" stroke="#7a5a20" stroke-width="4" stroke-linecap="round"/><path d="M5.500 20.500L11.500 13.500" stroke="#e8b84a" stroke-width="2.200" stroke-linecap="round"/></svg>
<div class="a" style="left:843px;top:171px;width:12px;height:23px;background:linear-gradient(90deg,#1c7a30 0 4px,#2ca848 4px 7px,#244a8a 7px 12px);"></div>
<!-- map canvas -->
<svg style="left:50px;top:207px" width="1870" height="791" viewBox="50 207 1870 791">
<defs><pattern id="tr" width="240" height="240" patternUnits="userSpaceOnUse" x="20" y="10"><g fill="none" stroke="#97c189" stroke-width="1" stroke-linecap="round" stroke-linejoin="round"><g transform="translate(9.4 5.6)"><path d="M3 .8L.5 8.800H5.500ZM3 8.800V12.300"/><ellipse cx="9.500" cy="4" rx="2.400" ry="3.300"/><path d="M9.500 7.300V12.300"/></g><g transform="translate(43.7 14.9)"><ellipse cx="3" cy="4" rx="2.400" ry="3.300"/><path d="M3 7.300V12.300"/><path d="M9.500 .8L7 8.800H12ZM9.500 8.800V12.300"/></g><g transform="translate(83.3 14.2)"><ellipse cx="3" cy="4" rx="2.400" ry="3.300"/><path d="M3 7.300V12.300"/><path d="M9.500 .8L7 8.800H12ZM9.500 8.800V12.300"/></g><g transform="translate(132.0 3.7)"><ellipse cx="3" cy="4" rx="2.400" ry="3.300"/><path d="M3 7.300V12.300"/><path d="M9.500 .8L7 8.800H12ZM9.500 8.800V12.300"/></g><g transform="translate(171.8 21.8)"><ellipse cx="3" cy="4" rx="2.400" ry="3.300"/><path d="M3 7.300V12.300"/><path d="M9.500 .8L7 8.800H12ZM9.500 8.800V12.300"/></g><g transform="translate(207.1 17.1)"><path d="M3 .8L.5 8.800H5.500ZM3 8.800V12.300"/><ellipse cx="9.500" cy="4" rx="2.400" ry="3.300"/><path d="M9.500 7.300V12.300"/></g><g transform="translate(21.3 51.5)"><path d="M3 .8L.5 8.800H5.500ZM3 8.800V12.300"/><ellipse cx="9.500" cy="4" rx="2.400" ry="3.300"/><path d="M9.500 7.300V12.300"/></g><g transform="translate(49.1 62.6)"><ellipse cx="3" cy="4" rx="2.400" ry="3.300"/><path d="M3 7.300V12.300"/><path d="M9.500 .8L7 8.800H12ZM9.500 8.800V12.300"/></g><g transform="translate(91.3 44.8)"><ellipse cx="3" cy="4" rx="2.400" ry="3.300"/><path d="M3 7.300V12.300"/><path d="M9.500 .8L7 8.800H12ZM9.500 8.800V12.300"/></g><g transform="translate(146.8 46.3)"><path d="M3 .8L.5 8.800H5.500ZM3 8.800V12.300"/><ellipse cx="9.500" cy="4" rx="2.400" ry="3.300"/><path d="M9.500 7.300V12.300"/></g><g transform="translate(182.7 50.9)"><path d="M3 .8L.5 8.800H5.500ZM3 8.800V12.300"/><ellipse cx="9.500" cy="4" rx="2.400" ry="3.300"/><path d="M9.500 7.300V12.300"/></g><g transform="translate(209.4 43.4)"><ellipse cx="3" cy="4" rx="2.400" ry="3.300"/><path d="M3 7.300V12.300"/><path d="M9.500 .8L7 8.800H12ZM9.500 8.800V12.300"/></g><g transform="translate(17.6 92.3)"><ellipse cx="3" cy="4" rx="2.400" ry="3.300"/><path d="M3 7.300V12.300"/><path d="M9.500 .8L7 8.800H12ZM9.500 8.800V12.300"/></g><g transform="translate(55.5 92.9)"><ellipse cx="3" cy="4" rx="2.400" ry="3.300"/><path d="M3 7.300V12.300"/><path d="M9.500 .8L7 8.800H12ZM9.500 8.800V12.300"/></g><g transform="translate(100.3 98.8)"><ellipse cx="3" cy="4" rx="2.400" ry="3.300"/><path d="M3 7.300V12.300"/><path d="M9.500 .8L7 8.800H12ZM9.500 8.800V12.300"/></g><g transform="translate(135.2 94.6)"><path d="M3 .8L.5 8.800H5.500ZM3 8.800V12.300"/><ellipse cx="9.500" cy="4" rx="2.400" ry="3.300"/><path d="M9.500 7.300V12.300"/></g><g transform="translate(178.8 88.9)"><path d="M3 .8L.5 8.800H5.500ZM3 8.800V12.300"/><ellipse cx="9.500" cy="4" rx="2.400" ry="3.300"/><path d="M9.500 7.300V12.300"/></g><g transform="translate(204.7 92.0)"><path d="M3 .8L.5 8.800H5.500ZM3 8.800V12.300"/><ellipse cx="9.500" cy="4" rx="2.400" ry="3.300"/><path d="M9.500 7.300V12.300"/></g><g transform="translate(11.5 133.7)"><ellipse cx="3" cy="4" rx="2.400" ry="3.300"/><path d="M3 7.300V12.300"/><path d="M9.500 .8L7 8.800H12ZM9.500 8.800V12.300"/></g><g transform="translate(63.4 140.3)"><path d="M3 .8L.5 8.800H5.500ZM3 8.800V12.300"/><ellipse cx="9.500" cy="4" rx="2.400" ry="3.300"/><path d="M9.500 7.300V12.300"/></g><g transform="translate(108.1 129.5)"><path d="M3 .8L.5 8.800H5.500ZM3 8.800V12.300"/><ellipse cx="9.500" cy="4" rx="2.400" ry="3.300"/><path d="M9.500 7.300V12.300"/></g><g transform="translate(141.7 135.9)"><ellipse cx="3" cy="4" rx="2.400" ry="3.300"/><path d="M3 7.300V12.300"/><path d="M9.500 .8L7 8.800H12ZM9.500 8.800V12.300"/></g><g transform="translate(187.3 144.7)"><ellipse cx="3" cy="4" rx="2.400" ry="3.300"/><path d="M3 7.300V12.300"/><path d="M9.500 .8L7 8.800H12ZM9.500 8.800V12.300"/></g><g transform="translate(223.3 123.5)"><path d="M3 .8L.5 8.800H5.500ZM3 8.800V12.300"/><ellipse cx="9.500" cy="4" rx="2.400" ry="3.300"/><path d="M9.500 7.300V12.300"/></g><g transform="translate(16.9 185.8)"><path d="M3 .8L.5 8.800H5.500ZM3 8.800V12.300"/><ellipse cx="9.500" cy="4" rx="2.400" ry="3.300"/><path d="M9.500 7.300V12.300"/></g><g transform="translate(48.5 171.3)"><path d="M3 .8L.5 8.800H5.500ZM3 8.800V12.300"/><ellipse cx="9.500" cy="4" rx="2.400" ry="3.300"/><path d="M9.500 7.300V12.300"/></g><g transform="translate(82.5 173.1)"><ellipse cx="3" cy="4" rx="2.400" ry="3.300"/><path d="M3 7.300V12.300"/><path d="M9.500 .8L7 8.800H12ZM9.500 8.800V12.300"/></g><g transform="translate(124.7 163.4)"><path d="M3 .8L.5 8.800H5.500ZM3 8.800V12.300"/><ellipse cx="9.500" cy="4" rx="2.400" ry="3.300"/><path d="M9.500 7.300V12.300"/></g><g transform="translate(165.0 167.9)"><ellipse cx="3" cy="4" rx="2.400" ry="3.300"/><path d="M3 7.300V12.300"/><path d="M9.500 .8L7 8.800H12ZM9.500 8.800V12.300"/></g><g transform="translate(222.0 163.9)"><ellipse cx="3" cy="4" rx="2.400" ry="3.300"/><path d="M3 7.300V12.300"/><path d="M9.500 .8L7 8.800H12ZM9.500 8.800V12.300"/></g><g transform="translate(20.6 223.2)"><path d="M3 .8L.5 8.800H5.500ZM3 8.800V12.300"/><ellipse cx="9.500" cy="4" rx="2.400" ry="3.300"/><path d="M9.500 7.300V12.300"/></g><g transform="translate(67.9 208.7)"><ellipse cx="3" cy="4" rx="2.400" ry="3.300"/><path d="M3 7.300V12.300"/><path d="M9.500 .8L7 8.800H12ZM9.500 8.800V12.300"/></g><g transform="translate(96.3 223.2)"><path d="M3 .8L.5 8.800H5.500ZM3 8.800V12.300"/><ellipse cx="9.500" cy="4" rx="2.400" ry="3.300"/><path d="M9.500 7.300V12.300"/></g><g transform="translate(131.5 206.2)"><ellipse cx="3" cy="4" rx="2.400" ry="3.300"/><path d="M3 7.300V12.300"/><path d="M9.500 .8L7 8.800H12ZM9.500 8.800V12.300"/></g><g transform="translate(173.4 213.6)"><path d="M3 .8L.5 8.800H5.500ZM3 8.800V12.300"/><ellipse cx="9.500" cy="4" rx="2.400" ry="3.300"/><path d="M9.500 7.300V12.300"/></g><g transform="translate(214.0 202.1)"><ellipse cx="3" cy="4" rx="2.400" ry="3.300"/><path d="M3 7.300V12.300"/><path d="M9.500 .8L7 8.800H12ZM9.500 8.800V12.300"/></g></g></pattern><clipPath id="mc"><rect x="50" y="207" width="1870" height="791"/></clipPath></defs>
<g clip-path="url(#mc)">
<rect x="50" y="207" width="1870" height="791" fill="#add19e"/>
<rect x="50" y="207" width="1870" height="791" fill="url(#tr)"/>
<path d="M1700 207H1920V671L1893 703L1875 683L1831 728L1700 860Z" fill="#eef0d5"/>
<path d="M1831 850L1854 866L1838 908L1700 920V850Z" fill="#eef0d5"/>
<path d="M736.500 868L736.500 888L694 913L678 921L603 929L590 920L545 945L548 1000H600L747 937L752 931L858 884V832L720.500 868.500Z" fill="#cdebb0"/>
<path d="M747 937L802 1000H596Z" fill="#eef0d5"/>
<path d="M545 945L548 1000H455L462 994L520 952Z" fill="#f2dad9"/>
<path d="M519 964L543 960L545 971L521 975Z" fill="#d5c5bd" stroke="#c2b0a8" stroke-width=".8"/>
<path d="M492 986L538 979L541 1000H494Z" fill="#d5c5bd" stroke="#c2b0a8" stroke-width=".8"/>
<path d="M418 958C440 962 450 975 450 1000H418Z" fill="#ddd6c6"/>
<path d="M418 959C438 963 447 978 448 1000" fill="none" stroke="#c9c3b5" stroke-width="5"/>
<path d="M418 959C438 963 447 978 448 1000" fill="none" stroke="#ffffff" stroke-width="3.200"/>
<path d="M1164 946L1357 946L1355 959L1350 974C1342 982 1330 987 1318 990L1272 997L1250 1000H1212L1205 993Z" fill="#f1eee6"/>
<path d="M235 1000L250 986L420 986V1000Z" fill="#e8d2c8"/>
<path d="M692 835L670 846L655 854.500L641.500 865L628 876L611.500 888L598 898L584.500 908.500L573.500 921L560 927.500L535 941L505 956L458 984" fill="none" stroke="#a3cad9" stroke-width="4.200" stroke-linecap="round" stroke-linejoin="round" opacity=".9"/>
<path d="M692 835L670 846L655 854.500L641.500 865L628 876L611.500 888L598 898L584.500 908.500L573.500 921L560 927.500L535 941L505 956L458 984" fill="none" stroke="#b2d8e4" stroke-width="2.600" stroke-linecap="round" stroke-linejoin="round"/>
<text transform="translate(655.500 848.500) rotate(-27)" font-family="Liberation Sans,sans-serif" font-style="italic" font-size="11" fill="#6a8fc0" stroke="#e4eef6" stroke-width="2.200" paint-order="stroke" stroke-opacity=".8" letter-spacing=".3">Vorder</text>
<path d="M560 1003L700 945L790 909L860 885" fill="none" stroke="#ffffff" stroke-width="11" stroke-linejoin="round"/>
<path d="M556 995.500L697 939.500L788 903.500L858 879.500" fill="none" stroke="#4a55c8" stroke-width="1.400" stroke-dasharray="5 3"/>
<rect x="797.500" y="889.500" width="54" height="23" rx="3" fill="#f1f1ee" stroke="#d2d2ce" stroke-width="1"/>
<text x="824.500" y="906" font-family="Liberation Sans,sans-serif" font-size="12.500" text-anchor="middle" fill="#6a6a6a" letter-spacing=".3">K 4325</text>
<path d="M1825 926L1925 942" fill="none" stroke="#ffffff" stroke-width="11.500"/>
<path d="M1825 919.500L1925 935.500" fill="none" stroke="#4a55c8" stroke-width="1.400" stroke-dasharray="5 3"/>
<path d="M435 207C428 225 424 232 417 240" fill="none" stroke="#e4eedb" stroke-width="3.600" stroke-linecap="round" opacity=".8"/><path d="M435 207C428 225 424 232 417 240" fill="none" stroke="#ad8a3c" stroke-width="1.8" stroke-dasharray="7 3.5"/>
<path d="M417 270L500 301L627 353" fill="none" stroke="#e4eedb" stroke-width="3.600" stroke-linecap="round" opacity=".8"/><path d="M417 270L500 301L627 353" fill="none" stroke="#ad8a3c" stroke-width="1.8" stroke-dasharray="7 3.5"/>
<path d="M780 207L631 355L474 522C460 538 440 552 417 564" fill="none" stroke="#e4eedb" stroke-width="3.600" stroke-linecap="round" opacity=".8"/><path d="M780 207L631 355L474 522C460 538 440 552 417 564" fill="none" stroke="#ad8a3c" stroke-width="1.8" stroke-dasharray="7 3.5"/>
<text transform="translate(590.500 416.500) rotate(-44.500)" font-family="Liberation Sans,sans-serif" font-size="10" fill="#555" stroke="#e6efe0" stroke-width="2.400" paint-order="stroke" letter-spacing=".45">Eselsstraße</text>
<path d="M1095 957.500C1115 965 1140 972 1161 973.500" fill="none" stroke="#e8f0e0" stroke-width="3.400" stroke-linecap="round" opacity=".75"/>
<path d="M1095 957.500C1115 965 1140 972 1161 973.500L1158 983" fill="none" stroke="#c8952e" stroke-width="1.800" stroke-dasharray="3.500 8"/>
<path d="M1302 959L1338 961C1350 963 1355 968 1351 973C1347 980 1335 985 1308 992L1264 998L1230 1001" fill="none" stroke="#c8952e" stroke-width="2.200" stroke-dasharray="8 3.500 2.500 3.500"/>
<path d="M1192 990L1230 998L1250 1001" fill="none" stroke="#c8952e" stroke-width="2.200" stroke-dasharray="6 4"/>
<path d="M1150 950C1160 962 1170 976 1184 986C1192 990 1198 992 1206 992" fill="none" stroke="#fbfbf8" stroke-width="3"/>
<text transform="translate(1147.500 953) rotate(47)" font-family="Liberation Sans,sans-serif" font-size="11.500" fill="#444" stroke="#f8f8f4" stroke-width="2.400" paint-order="stroke" letter-spacing=".5">en-Weg</text>
<path d="M1920 958H1878L1870 969L1800 998M1870 969L1890 1000" fill="none" stroke="#a49aa0" stroke-width="1.600" stroke-dasharray="7 3 2 3"/>
<path d="M1893 977L1925 968" fill="none" stroke="#c9a24a" stroke-width="2" stroke-dasharray="6 3"/>
<path d="M1858 207H1920V244L1895 236Z" fill="#dfdfdf"/>
<path d="M1840 200L1905 236" fill="none" stroke="#e6b070" stroke-width="11.500"/>
<path d="M1840 200L1905 236" fill="none" stroke="#fcd6a4" stroke-width="9.500"/>
<rect x="1887.500" y="231.500" width="40" height="22" rx="3" fill="#fbe8cd" stroke="#d8c4a4" stroke-width="1"/>
<text x="1893" y="247.500" font-family="Liberation Sans,sans-serif" font-size="12.500" fill="#6b5a44" letter-spacing=".3">B 29</text>
<path d="M1828 271C1850 271 1870 274 1890 282L1922 296" fill="none" stroke="#aad3df" stroke-width="2.200"/>
<text transform="translate(1879 291) rotate(20)" font-family="Liberation Sans,sans-serif" font-style="italic" font-size="10" fill="#4d80b3">Reichenb</text>
<path d="M1905 326L1922 330V483L1900 464L1906 440L1863 384Z" fill="#dfdfdf"/>
<path d="M1880 366L1903 358L1911 376L1888 384Z" fill="#d5c5bd" stroke="#c2b0a8" stroke-width=".8"/>
<path d="M1909 346L1922 341V358L1915 359Z" fill="#d5c5bd" stroke="#c2b0a8" stroke-width=".8"/>
<path d="M1903 402L1913 395L1919 405L1909 412Z" fill="#d5c5bd" stroke="#c2b0a8" stroke-width=".8"/>
<path d="M1908 420L1915 415L1919 422L1913 427Z" fill="#d5c5bd" stroke="#c2b0a8" stroke-width=".8"/>
<path d="M1906 452L1919 444L1922 460L1912 462Z" fill="#d5c5bd" stroke="#c2b0a8" stroke-width=".8"/>
<path d="M1904 450L1922 428" fill="none" stroke="#fff" stroke-width="3.500"/>
<path d="M1828 543C1845 528 1862 508 1880 485L1904 453" fill="none" stroke="#b0883a" stroke-width="1.700" stroke-dasharray="6 1.200"/>
<path d="M855 328.500L657.800 429.800L668.800 577.500L596 711L720.800 868.500L858 832.500Z" fill="none" stroke="#f5f02c" stroke-width="6.400" stroke-linejoin="miter"/>
<path d="M855 328.500L657.800 429.800L668.800 577.500L596 711L720.800 868.500L858 832.500Z" fill="#8b5a9a" stroke="#1a1208" stroke-width="1.100" stroke-linejoin="miter"/>
</g>
<path d="M50 207.500H1920" stroke="#8f8f8f" stroke-width="1"/>
</svg>
<div class="a" style="left:0;top:208px;width:50px;height:790px;background:#f0f0f0;"></div>
<!-- left toolbar -->
<div class="a" style="left:0;top:206px;width:50px;height:1px;background:#b9b9b9;"></div>
<div class="a" style="left:49px;top:207px;width:1px;height:791px;background:#d6d6d6;"></div>
<svg style="left:4px;top:210px" width="44" height="4" viewBox="0 0 44 4"><rect x="1.3" y="1.300" width="1.500" height="1.500" fill="#a2a2a2"/><rect x="0.3" y=".3" width="1.200" height="1.200" fill="#fdfdfd"/><rect x="5.3" y="1.300" width="1.500" height="1.500" fill="#a2a2a2"/><rect x="4.3" y=".3" width="1.200" height="1.200" fill="#fdfdfd"/><rect x="9.3" y="1.300" width="1.500" height="1.500" fill="#a2a2a2"/><rect x="8.3" y=".3" width="1.200" height="1.200" fill="#fdfdfd"/><rect x="13.3" y="1.300" width="1.500" height="1.500" fill="#a2a2a2"/><rect x="12.3" y=".3" width="1.200" height="1.200" fill="#fdfdfd"/><rect x="17.3" y="1.300" width="1.500" height="1.500" fill="#a2a2a2"/><rect x="16.3" y=".3" width="1.200" height="1.200" fill="#fdfdfd"/><rect x="21.3" y="1.300" width="1.500" height="1.500" fill="#a2a2a2"/><rect x="20.3" y=".3" width="1.200" height="1.200" fill="#fdfdfd"/><rect x="25.3" y="1.300" width="1.500" height="1.500" fill="#a2a2a2"/><rect x="24.3" y=".3" width="1.200" height="1.200" fill="#fdfdfd"/><rect x="29.3" y="1.300" width="1.500" height="1.500" fill="#a2a2a2"/><rect x="28.3" y=".3" width="1.200" height="1.200" fill="#fdfdfd"/><rect x="33.3" y="1.300" width="1.500" height="1.500" fill="#a2a2a2"/><rect x="32.3" y=".3" width="1.200" height="1.200" fill="#fdfdfd"/><rect x="37.3" y="1.300" width="1.500" height="1.500" fill="#a2a2a2"/><rect x="36.3" y=".3" width="1.200" height="1.200" fill="#fdfdfd"/><rect x="41.3" y="1.300" width="1.500" height="1.500" fill="#a2a2a2"/><rect x="40.3" y=".3" width="1.200" height="1.200" fill="#fdfdfd"/></svg>
<svg style="left:5.0px;top:221.0px" width="24" height="24" viewBox="0 0 24 24"><path d="M3 3.500L9.500 19.500L17 3.500L21 2.500" fill="none" stroke="#222" stroke-width="1.200"/><circle cx="3" cy="3.500" r="1.700" fill="#fff" stroke="#222" stroke-width=".9"/><circle cx="17" cy="3.500" r="1.700" fill="#fff" stroke="#222" stroke-width=".9"/><circle cx="9.500" cy="19.500" r="1.700" fill="#fff" stroke="#222" stroke-width=".9"/><path d="M21 1L23 2.500L21 4L19.500 2.500Z" fill="#fff" stroke="#222" stroke-width=".8"/><rect x="14.5" y="14.5" width="9.5" height="9.5" rx="2" fill="#5b9b50" stroke="#3f7a38" stroke-width=".6"/><path d="M16.4 19.25H22.1M19.25 16.4V22.1" stroke="#fff" stroke-width="1.8"/></svg>
<svg style="left:5.0px;top:251.0px" width="24" height="24" viewBox="0 0 24 24"><rect x="0" y="1" width="18" height="18" fill="#8fb0d6"/><rect x="0" y="1" width="6" height="6" fill="#1f3454"/><rect x="12" y="1" width="6" height="6" fill="#2a4a78"/><rect x="6" y="7" width="6" height="6" fill="#1f3454"/><rect x="0" y="13" width="6" height="6" fill="#2a4a78"/><rect x="6" y="1" width="6" height="6" fill="#5b86bb"/><rect x="12" y="13" width="6" height="6" fill="#b9d0ec"/><rect x="14.5" y="14.5" width="9.5" height="9.5" rx="2" fill="#5b9b50" stroke="#3f7a38" stroke-width=".6"/><path d="M16.4 19.25H22.1M19.25 16.4V22.1" stroke="#fff" stroke-width="1.8"/></svg>
<svg style="left:5.0px;top:282.0px" width="24" height="24" viewBox="0 0 24 24"><rect x="1.500" y="1.500" width="19" height="19" fill="#8fb0d6" stroke="#2e4f7c" stroke-width="1.100"/><path d="M1.500 12H20.500M11 1.500V20.500M1.500 1.500L11 12M11 1.500L1.500 12M11 12L20.500 1.500M6 12V20.500M1.500 16.500H11" stroke="#2e4f7c" stroke-width=".9" fill="none"/><rect x="14.5" y="14.5" width="9.5" height="9.5" rx="2" fill="#5b9b50" stroke="#3f7a38" stroke-width=".6"/><path d="M16.4 19.25H22.1M19.25 16.4V22.1" stroke="#fff" stroke-width="1.8"/></svg>
<svg style="left:5.0px;top:312.0px" width="24" height="24" viewBox="0 0 24 24"><path d="M6 6C6 2 14 1.500 14 8C14 13 9 15.500 6 17L5 15.500C8 13.500 9.500 12 9.500 10C7.500 10.500 6 8.500 6 6Z" fill="#5b86bb" stroke="#3a5f90" stroke-width=".6"/><rect x="14.5" y="14.5" width="9.5" height="9.5" rx="2" fill="#5b9b50" stroke="#3f7a38" stroke-width=".6"/><path d="M16.4 19.25H22.1M19.25 16.4V22.1" stroke="#fff" stroke-width="1.8"/></svg>
<svg style="left:5.0px;top:342.0px" width="24" height="24" viewBox="0 0 24 24"><path d="M2 22C4 12 10 4 21 1.500C20 9 14 16 5 18.500Z" fill="#7ea4d4" stroke="#355f95" stroke-width=".9"/><path d="M2.500 22L15 7" stroke="#2e4f7c" stroke-width="1"/><rect x="14.5" y="14.5" width="9.5" height="9.5" rx="2" fill="#5b9b50" stroke="#3f7a38" stroke-width=".6"/><path d="M16.4 19.25H22.1M19.25 16.4V22.1" stroke="#fff" stroke-width="1.8"/></svg>
<svg style="left:5.0px;top:373.0px" width="24" height="24" viewBox="0 0 24 24"><rect x="1.500" y="1.500" width="20" height="20" rx="2" fill="#a9c2e2" stroke="#5b7fae" stroke-width="1.100"/><path d="M4 4L8.500 17L15 3.500L20 4.500" fill="none" stroke="#1f3f6a" stroke-width="1.100"/><circle cx="4" cy="4" r="1.600" fill="#fff" stroke="#1f3f6a" stroke-width=".8"/><circle cx="15" cy="3.500" r="1.600" fill="#fff" stroke="#1f3f6a" stroke-width=".8"/><circle cx="8.500" cy="17" r="1.600" fill="#fff" stroke="#1f3f6a" stroke-width=".8"/><rect x="14.5" y="14.5" width="9.5" height="9.5" rx="2" fill="#5b9b50" stroke="#3f7a38" stroke-width=".6"/><path d="M16.4 19.25H22.1M19.25 16.4V22.1" stroke="#fff" stroke-width="1.8"/></svg>
<svg style="left:5.0px;top:401.0px" width="24" height="24" viewBox="0 0 24 24"><path d="M3 9C3 3 8 2 11 3C15 1.500 20 4 19 10C18.500 13 17 14 16.500 16L17 21H14L13.500 16C12 17 10 16.500 9 15L8.500 21H5.500L6 14C4 13 3 11 3 9Z" fill="#3f6fa8" stroke="#1f3f6a" stroke-width=".8"/><path d="M11 6C12 9 12 12 10.500 15" fill="none" stroke="#1f3f6a" stroke-width=".8"/><rect x="14.5" y="14.5" width="9.5" height="9.5" rx="2" fill="#5b9b50" stroke="#3f7a38" stroke-width=".6"/><path d="M16.4 19.25H22.1M19.25 16.4V22.1" stroke="#fff" stroke-width="1.8"/></svg>
<svg style="left:35px;top:410px" width="10" height="6" viewBox="0 0 10 6"><path d="M.5 .5H9.500L5 5.500Z" fill="#111"/></svg>
<svg style="left:5.0px;top:431.0px" width="24" height="24" viewBox="0 0 24 24"><ellipse cx="11" cy="11" rx="10" ry="9.500" fill="#a9c6e8" stroke="#5b7fae" stroke-width="1"/><path d="M1.500 8H20.500M1.500 14H20.500M11 1.500V20.500M5 3.500V18.500M17 3.500V18.500" stroke="#e8f0fa" stroke-width=".9"/><path d="M4 6C7 4 8 8 6 10C4 12 3 9 4 6ZM12 5C16 4 17 8 15 10C13 11 11 8 12 5ZM8 14C11 13 12 17 10 18C8 18 7 16 8 14Z" fill="#4a77b0" opacity=".7"/><rect x="14.5" y="14.5" width="9.5" height="9.5" rx="2" fill="#5b9b50" stroke="#3f7a38" stroke-width=".6"/><path d="M16.4 19.25H22.1M19.25 16.4V22.1" stroke="#fff" stroke-width="1.8"/></svg>
<svg style="left:35px;top:440px" width="10" height="6" viewBox="0 0 10 6"><path d="M.5 .5H9.500L5 5.500Z" fill="#111"/></svg>
<svg style="left:5.0px;top:461.0px" width="24" height="24" viewBox="0 0 24 24"><ellipse cx="11" cy="11" rx="10" ry="9.500" fill="#2f5080" stroke="#1f3454" stroke-width="1"/><ellipse cx="11" cy="11" rx="4.500" ry="9.500" fill="none" stroke="#b9d0ec" stroke-width="1"/><path d="M1.500 7.500H20.500M1.500 11.500H20.500M1.500 15H20.500" stroke="#b9d0ec" stroke-width="1.600"/><rect x="14.5" y="14.5" width="9.5" height="9.5" rx="2" fill="#5b9b50" stroke="#3f7a38" stroke-width=".6"/><path d="M16.4 19.25H22.1M19.25 16.4V22.1" stroke="#fff" stroke-width="1.8"/></svg>
<svg style="left:5.0px;top:491.0px" width="24" height="24" viewBox="0 0 24 24"><ellipse cx="11" cy="11" rx="10" ry="9.500" fill="#dbe8f6" stroke="#6a90c0" stroke-width="1"/><ellipse cx="11" cy="11" rx="4.500" ry="9.500" fill="none" stroke="#8fb0d6" stroke-width=".8"/><path d="M1.500 7.500H20.500M1.500 14.500H20.500M11 1.500V20.500" stroke="#8fb0d6" stroke-width=".8"/><path d="M5 6L9 16L14 6L18 5.500" fill="none" stroke="#222" stroke-width="1.100"/><circle cx="5" cy="6" r="1.400" fill="#fff" stroke="#222" stroke-width=".8"/><circle cx="14" cy="6" r="1.400" fill="#fff" stroke="#222" stroke-width=".8"/><circle cx="9" cy="16" r="1.400" fill="#fff" stroke="#222" stroke-width=".8"/><rect x="14.5" y="14.5" width="9.5" height="9.5" rx="2" fill="#5b9b50" stroke="#3f7a38" stroke-width=".6"/><path d="M16.4 19.25H22.1M19.25 16.4V22.1" stroke="#fff" stroke-width="1.8"/></svg>
<svg style="left:35px;top:500px" width="10" height="6" viewBox="0 0 10 6"><path d="M.5 .5H9.500L5 5.500Z" fill="#111"/></svg>
<svg style="left:5.0px;top:520.0px" width="24" height="24" viewBox="0 0 24 24"><path d="M3 3.500L9.500 19.500L17 3.500L21 2.500" fill="none" stroke="#222" stroke-width="1.200"/><circle cx="3" cy="3.500" r="1.700" fill="#fff" stroke="#222" stroke-width=".9"/><circle cx="17" cy="3.500" r="1.700" fill="#fff" stroke="#222" stroke-width=".9"/><circle cx="9.500" cy="19.500" r="1.700" fill="#fff" stroke="#222" stroke-width=".9"/><path d="M21 1L23 2.500L21 4L19.500 2.500Z" fill="#fff" stroke="#222" stroke-width=".8"/><rect x="14.5" y="14.5" width="9.5" height="9.5" rx="1.5" fill="#caa52e" stroke="#a8861c" stroke-width=".6"/><path d="M19.25 15.73L19.25 22.77M22.29 17.49L16.21 21.01M22.29 21.01L16.21 17.49" stroke="#fff" stroke-width="1.250"/><circle cx="19.25" cy="19.25" r="1.83" fill="#fff"/><circle cx="19.25" cy="19.25" r="0.88" fill="#caa52e"/></svg>
<svg style="left:35px;top:528px" width="10" height="6" viewBox="0 0 10 6"><path d="M.5 .5H9.500L5 5.500Z" fill="#111"/></svg>
<svg style="left:12.0px;top:552.0px" width="24" height="24" viewBox="0 0 24 24"><rect x="1.500" y="2.500" width="20" height="19" rx="1.500" fill="#4a77b0" stroke="#2e4f7c" stroke-width="1"/><path d="M6.500 3V21M11.500 3V21M16.500 3V21M2 7.500H21M2 12H21M2 16.500H21" stroke="#dbe8f6" stroke-width="1"/><rect x="7" y="8" width="14" height="13" fill="#fff" opacity=".55"/><rect x="14.5" y="14.5" width="9.5" height="9.5" rx="2" fill="#5b9b50" stroke="#3f7a38" stroke-width=".6"/><path d="M16.4 19.25H22.1M19.25 16.4V22.1" stroke="#fff" stroke-width="1.8"/></svg>
<!-- layer panel -->
<div class="a" style="left:50px;top:170px;width:369px;height:824px;background:#fff;box-shadow:0 1px 8px rgba(0,0,0,.38);"></div>
<div class="a" style="left:50px;top:233px;width:369px;height:761px;border:1px solid #8c8c8c;box-sizing:border-box;"></div>
<div class="t" style="left:60px;top:181.300px;font-size:14.700px;color:#a3a3a3;">Layer</div>
<div class="a" style="left:393px;top:178px;width:25px;height:25px;background:#e5e5e5;"></div>
<svg style="left:400.500px;top:185.500px" width="10" height="10" viewBox="0 0 10 10"><path d="M1.500 1.500L8.500 8.500M8.500 1.500L1.500 8.500" stroke="#fbfbfb" stroke-width="1.200"/></svg>
<div class="a" style="left:50px;top:207px;width:369px;height:26px;background:#f0f0f0;"></div>
<svg style="left:54.0px;top:210.0px" width="18" height="18" viewBox="0 0 18 18"><path d="M9 8L16 2" stroke="#caa23a" stroke-width="2.200" stroke-linecap="round"/><path d="M2 7L8 5L12 10L7 14Z" fill="#d84a2a"/><path d="M4 11L9 8L12 12L8 15Z" fill="#f0c030"/><path d="M2 9L5 12L4 14Z" fill="#4a7ab8"/></svg>
<svg style="left:77.0px;top:210.0px" width="18" height="18" viewBox="0 0 18 18"><path d="M6 3H13V12H6Z" fill="#e8e8e8" stroke="#7a7a7a" stroke-width=".9"/><path d="M3 6H10V15H3Z" fill="#f4f4f4" stroke="#8a8a8a" stroke-width=".9"/><path d="M9 1.500V9" stroke="#4a7ab8" stroke-width="1.300"/><rect x="10" y="10" width="7" height="7" rx="1.500" fill="#5b9b50"/><path d="M11.500 13.500H15.500M13.500 11.500V15.500" stroke="#fff" stroke-width="1.300"/></svg>
<svg style="left:100.0px;top:210.0px" width="18" height="18" viewBox="0 0 18 18"><path d="M1 8C4 3 13 3 16 8C13 13 4 13 1 8Z" fill="#f6f6f6" stroke="#7a7a7a" stroke-width=".9"/><circle cx="8.500" cy="8" r="3" fill="#5b86bb" stroke="#2e4f7c" stroke-width=".7"/><circle cx="8.500" cy="8" r="1.200" fill="#111"/><path d="M10 13H17L13.500 17Z" fill="#111"/></svg>
<svg style="left:122.0px;top:210.0px" width="18" height="18" viewBox="0 0 18 18"><path d="M1.500 2H16.500L11 9V16L7 14V9Z" fill="#5d92d2" stroke="#2f5f9a" stroke-width=".9"/><path d="M2 2.500H16" stroke="#f0d23c" stroke-width="2"/></svg>
<svg style="left:146.0px;top:210.0px" width="18" height="18" viewBox="0 0 18 18"><text x="6" y="11" font-family="Liberation Serif,serif" font-size="15" text-anchor="middle" fill="#7a3a8a">ε</text><path d="M9 9H16L13.500 12V16L11.500 15V12Z" fill="#c8c8c8" stroke="#8a8a8a" stroke-width=".7"/></svg>
<svg style="left:169px;top:216px" width="10" height="6" viewBox="0 0 10 6"><path d="M.5 .5H9.500L5 5.500Z" fill="#111"/></svg>
<svg style="left:184.0px;top:210.0px" width="18" height="18" viewBox="0 0 18 18"><rect x="2" y="3" width="7" height="12" fill="none" stroke="#8a8a8a" stroke-width=".8" stroke-dasharray="1.500 1"/><path d="M4 6H7V9H4ZM4 11H7V14H4Z" fill="#f0b030"/><path d="M12.500 2V12H9.500L13.500 17L17.500 12H14.500V2Z" fill="#4a7ab8" stroke="#2a4f82" stroke-width=".6"/></svg>
<svg style="left:207.0px;top:210.0px" width="18" height="18" viewBox="0 0 18 18"><rect x="2" y="3" width="7" height="12" fill="none" stroke="#8a8a8a" stroke-width=".8" stroke-dasharray="1.500 1"/><path d="M4 6H7V9H4ZM4 11H7V14H4Z" fill="#f0b030"/><path d="M12.500 17V7H9.500L13.500 2L17.500 7H14.500V17Z" fill="#4a7ab8" stroke="#2a4f82" stroke-width=".6"/></svg>
<svg style="left:230.0px;top:210.0px" width="18" height="18" viewBox="0 0 18 18"><path d="M2.500 2.500H14.500V13.500H2.500Z" fill="#fafafa" stroke="#8a8a8a" stroke-width=".9"/><rect x="10" y="11" width="7" height="6" rx="1.500" fill="#d83a3a"/><path d="M11.500 14H15.500" stroke="#fff" stroke-width="1.300"/></svg>
<div class="a" style="left:127px;top:330px;width:291px;height:24px;background:#d9d9d9;"></div>
<div class="a" style="left:51px;top:234px;width:367px;height:739px;overflow:hidden;">
<div class="a" style="left:-51px;top:-234px;width:600px;height:1000px;">
<svg style="left:79px;top:238px" width="16" height="16" viewBox="0 0 16 16"><rect x=".5" y=".5" width="15" height="15" fill="#fff" stroke="#262626" stroke-width="1"/><path d="M3.200 8.200L6.500 11.500L13 4.200" fill="none" stroke="#1e1e1e" stroke-width="1.150"/></svg>
<svg style="left:104px;top:239px" width="14" height="14" viewBox="0 0 14 14"><circle cx="7" cy="7" r="5.300" fill="#dcab32" stroke="#7a5a10" stroke-width="1"/></svg>
<div class="t" style="left:127.6px;top:239.1px;font-size:15px;letter-spacing:-0.227px;color:#000;font-weight:bold;">Funde_WT_2017_2019</div>
<svg style="left:59px;top:264px" width="8" height="12" viewBox="0 0 8 12"><path d="M1.500 1L6.500 6L1.500 11" fill="none" stroke="#a6a6a6" stroke-width="1.500"/></svg>
<svg style="left:79px;top:262px" width="16" height="16" viewBox="0 0 16 16"><rect x=".5" y=".5" width="15" height="15" fill="#fff" stroke="#262626" stroke-width="1"/><path d="M3.200 8.200L6.500 11.500L13 4.200" fill="none" stroke="#1e1e1e" stroke-width="1.150"/></svg>
<svg style="left:102px;top:259px" width="18" height="20" viewBox="0 0 18 20"><path d="M1.500 9.500V18.500H9.500" fill="none" stroke="#c4c4c4" stroke-width="1"/><path d="M4.500 7.500H13.500V16.500H4.500Z" fill="#f1f1f1" stroke="#8e8e8e" stroke-width="1"/><path d="M7.500 4.500H16.500V13.500H7.500Z" fill="#e9e9e9" stroke="#8e8e8e" stroke-width="1"/><path d="M10.500 12V3.500C10.500 1.500 13.500 1.500 13.500 3.500V10.500C13.500 11.500 12 11.500 12 10.500V5" fill="none" stroke="#5b86bb" stroke-width="1.100"/></svg>
<div class="t" style="left:127.6px;top:263.1px;font-size:15px;letter-spacing:-0.726px;color:#000;">Strasse_Wege</div>
<svg style="left:57px;top:290px" width="12" height="8" viewBox="0 0 12 8"><path d="M1 1.500L6 6.500L11 1.500" fill="none" stroke="#262626" stroke-width="1.500"/></svg>
<svg style="left:79px;top:286px" width="16" height="16" viewBox="0 0 16 16"><rect x=".5" y=".5" width="15" height="15" fill="#fff" stroke="#262626" stroke-width="1"/><path d="M3.200 8.200L6.500 11.500L13 4.200" fill="none" stroke="#1e1e1e" stroke-width="1.150"/></svg>
<svg style="left:102px;top:283px" width="18" height="20" viewBox="0 0 18 20"><path d="M1.500 9.500V18.500H9.500" fill="none" stroke="#c4c4c4" stroke-width="1"/><path d="M4.500 7.500H13.500V16.500H4.500Z" fill="#f1f1f1" stroke="#8e8e8e" stroke-width="1"/><path d="M7.500 4.500H16.500V13.500H7.500Z" fill="#e9e9e9" stroke="#8e8e8e" stroke-width="1"/><path d="M10.500 12V3.500C10.500 1.500 13.500 1.500 13.500 3.500V10.500C13.500 11.500 12 11.500 12 10.500V5" fill="none" stroke="#5b86bb" stroke-width="1.100"/></svg>
<div class="t" style="left:127.6px;top:287.1px;font-size:15px;letter-spacing:-0.829px;color:#000;">NSG_1937_und_1983</div>
<svg style="left:81.5px;top:314px" width="12" height="8" viewBox="0 0 12 8"><path d="M1 1.500L6 6.500L11 1.500" fill="none" stroke="#262626" stroke-width="1.500"/></svg>
<svg style="left:104px;top:310px" width="16" height="16" viewBox="0 0 16 16"><rect x=".5" y=".5" width="15" height="15" fill="#fff" stroke="#262626" stroke-width="1"/><path d="M3.200 8.200L6.500 11.500L13 4.200" fill="none" stroke="#1e1e1e" stroke-width="1.150"/></svg>
<svg style="left:127px;top:307px" width="18" height="20" viewBox="0 0 18 20"><path d="M1.500 9.500V18.500H9.500" fill="none" stroke="#c4c4c4" stroke-width="1"/><path d="M4.500 7.500H13.500V16.500H4.500Z" fill="#f1f1f1" stroke="#8e8e8e" stroke-width="1"/><path d="M7.500 4.500H16.500V13.500H7.500Z" fill="#e9e9e9" stroke="#8e8e8e" stroke-width="1"/><path d="M10.500 12V3.500C10.500 1.500 13.500 1.500 13.500 3.500V10.500C13.500 11.500 12 11.500 12 10.500V5" fill="none" stroke="#5b86bb" stroke-width="1.100"/></svg>
<div class="t" style="left:152.3px;top:311.1px;font-size:15px;letter-spacing:-0.990px;color:#000;">NSG_1983</div>
<svg style="left:129px;top:334px" width="16" height="16" viewBox="0 0 16 16"><rect x=".5" y=".5" width="15" height="15" fill="#fff" stroke="#262626" stroke-width="1"/><path d="M3.200 8.200L6.500 11.500L13 4.200" fill="none" stroke="#1e1e1e" stroke-width="1.150"/></svg>
<div class="a" style="left:151px;top:332.5px;width:19px;height:19px;background:#6262b2;border:1px solid #55559a;box-sizing:border-box;"></div>
<div class="t" style="left:176.4px;top:335.1px;font-size:15px;letter-spacing:-0.364px;color:#000;font-weight:bold;text-decoration:underline;text-underline-offset:0.300px;text-decoration-thickness:1.200px;">nsg_1983_flaeche</div>
<svg style="left:129px;top:358px" width="16" height="16" viewBox="0 0 16 16"><rect x=".5" y=".5" width="15" height="15" fill="#fff" stroke="#262626" stroke-width="1"/><path d="M3.200 8.200L6.500 11.500L13 4.200" fill="none" stroke="#1e1e1e" stroke-width="1.150"/></svg>
<div class="a" style="left:151px;top:362.5px;width:19px;height:6px;background:#f4ef25;"></div>
<div class="t" style="left:176.4px;top:359.1px;font-size:15px;letter-spacing:-0.441px;color:#000;font-weight:bold;">nsg_1983_umriss</div>
<svg style="left:81.5px;top:386px" width="12" height="8" viewBox="0 0 12 8"><path d="M1 1.500L6 6.500L11 1.500" fill="none" stroke="#262626" stroke-width="1.500"/></svg>
<svg style="left:104px;top:382px" width="16" height="16" viewBox="0 0 16 16"><rect x=".5" y=".5" width="15" height="15" fill="#fff" stroke="#262626" stroke-width="1"/><path d="M3.200 8.200L6.500 11.500L13 4.200" fill="none" stroke="#1e1e1e" stroke-width="1.150"/></svg>
<svg style="left:127px;top:379px" width="18" height="20" viewBox="0 0 18 20"><path d="M1.500 9.500V18.500H9.500" fill="none" stroke="#c4c4c4" stroke-width="1"/><path d="M4.500 7.500H13.500V16.500H4.500Z" fill="#f1f1f1" stroke="#8e8e8e" stroke-width="1"/><path d="M7.500 4.500H16.500V13.500H7.500Z" fill="#e9e9e9" stroke="#8e8e8e" stroke-width="1"/><path d="M10.500 12V3.500C10.500 1.500 13.500 1.500 13.500 3.500V10.500C13.500 11.500 12 11.500 12 10.500V5" fill="none" stroke="#5b86bb" stroke-width="1.100"/></svg>
<div class="t" style="left:152.3px;top:383.1px;font-size:15px;letter-spacing:-0.243px;color:#000;">NSG_1937 = Alter Bannwald</div>
<svg style="left:129px;top:406px" width="16" height="16" viewBox="0 0 16 16"><rect x=".5" y=".5" width="15" height="15" fill="#fff" stroke="#262626" stroke-width="1"/><path d="M3.200 8.200L6.500 11.500L13 4.200" fill="none" stroke="#1e1e1e" stroke-width="1.150"/></svg>
<div class="a" style="left:151px;top:411.5px;width:19px;height:4px;background:#0a0a0a;"></div>
<div class="t" style="left:176.4px;top:407.1px;font-size:15px;letter-spacing:-0.441px;color:#000;font-weight:bold;">nsg_1937_umriss</div>
<svg style="left:129px;top:430px" width="16" height="16" viewBox="0 0 16 16"><rect x=".5" y=".5" width="15" height="15" fill="#fff" stroke="#262626" stroke-width="1"/><path d="M3.200 8.200L6.500 11.500L13 4.200" fill="none" stroke="#1e1e1e" stroke-width="1.150"/></svg>
<svg style="left:151px;top:428.5px" width="19" height="19" viewBox="0 0 19 19"><rect x="1" y="1" width="17" height="17" fill="#fff" stroke="#c0272d" stroke-width="2"/><path d="M7 1V18M12.500 1V18" stroke="#c0272d" stroke-width="1.300"/></svg>
<div class="t" style="left:176.4px;top:431.1px;font-size:15px;letter-spacing:-0.364px;color:#000;font-weight:bold;">nsg_1937_flaeche</div>
<svg style="left:59px;top:456px" width="8" height="12" viewBox="0 0 8 12"><path d="M1.500 1L6.500 6L1.500 11" fill="none" stroke="#a6a6a6" stroke-width="1.500"/></svg>
<svg style="left:79px;top:454px" width="16" height="16" viewBox="0 0 16 16"><rect x=".5" y=".5" width="15" height="15" fill="#fff" stroke="#262626" stroke-width="1"/></svg>
<svg style="left:102px;top:451px" width="18" height="20" viewBox="0 0 18 20"><path d="M1.500 9.500V18.500H9.500" fill="none" stroke="#c4c4c4" stroke-width="1"/><path d="M4.500 7.500H13.500V16.500H4.500Z" fill="#f1f1f1" stroke="#8e8e8e" stroke-width="1"/><path d="M7.500 4.500H16.500V13.500H7.500Z" fill="#e9e9e9" stroke="#8e8e8e" stroke-width="1"/><path d="M10.500 12V3.500C10.500 1.500 13.500 1.500 13.500 3.500V10.500C13.500 11.500 12 11.500 12 10.500V5" fill="none" stroke="#5b86bb" stroke-width="1.100"/></svg>
<div class="t" style="left:127.6px;top:455.1px;font-size:15px;letter-spacing:-0.253px;color:#000;">Pflanzengesellschaften</div>
<svg style="left:59px;top:480px" width="8" height="12" viewBox="0 0 8 12"><path d="M1.500 1L6.500 6L1.500 11" fill="none" stroke="#a6a6a6" stroke-width="1.500"/></svg>
<svg style="left:79px;top:478px" width="16" height="16" viewBox="0 0 16 16"><rect x=".5" y=".5" width="15" height="15" fill="#fff" stroke="#262626" stroke-width="1"/></svg>
<svg style="left:102px;top:475px" width="18" height="20" viewBox="0 0 18 20"><path d="M1.500 9.500V18.500H9.500" fill="none" stroke="#c4c4c4" stroke-width="1"/><path d="M4.500 7.500H13.500V16.500H4.500Z" fill="#f1f1f1" stroke="#8e8e8e" stroke-width="1"/><path d="M7.500 4.500H16.500V13.500H7.500Z" fill="#e9e9e9" stroke="#8e8e8e" stroke-width="1"/><path d="M10.500 12V3.500C10.500 1.500 13.500 1.500 13.500 3.500V10.500C13.500 11.500 12 11.500 12 10.500V5" fill="none" stroke="#5b86bb" stroke-width="1.100"/></svg>
<div class="t" style="left:127.6px;top:479.1px;font-size:15px;letter-spacing:0.175px;color:#000;">Biotope</div>
<svg style="left:59px;top:504px" width="8" height="12" viewBox="0 0 8 12"><path d="M1.500 1L6.500 6L1.500 11" fill="none" stroke="#a6a6a6" stroke-width="1.500"/></svg>
<svg style="left:79px;top:502px" width="16" height="16" viewBox="0 0 16 16"><rect x=".5" y=".5" width="15" height="15" fill="#fff" stroke="#262626" stroke-width="1"/></svg>
<svg style="left:102px;top:499px" width="18" height="20" viewBox="0 0 18 20"><path d="M1.500 9.500V18.500H9.500" fill="none" stroke="#c4c4c4" stroke-width="1"/><path d="M4.500 7.500H13.500V16.500H4.500Z" fill="#f1f1f1" stroke="#8e8e8e" stroke-width="1"/><path d="M7.500 4.500H16.500V13.500H7.500Z" fill="#e9e9e9" stroke="#8e8e8e" stroke-width="1"/><path d="M10.500 12V3.500C10.500 1.500 13.500 1.500 13.500 3.500V10.500C13.500 11.500 12 11.500 12 10.500V5" fill="none" stroke="#5b86bb" stroke-width="1.100"/></svg>
<div class="t" style="left:127.6px;top:503.1px;font-size:15px;letter-spacing:-0.100px;color:#000;">Baumfreie_offene_Moorbereiche</div>
<svg style="left:59px;top:528px" width="8" height="12" viewBox="0 0 8 12"><path d="M1.500 1L6.500 6L1.500 11" fill="none" stroke="#a6a6a6" stroke-width="1.500"/></svg>
<svg style="left:79px;top:526px" width="16" height="16" viewBox="0 0 16 16"><rect x=".5" y=".5" width="15" height="15" fill="#fff" stroke="#262626" stroke-width="1"/></svg>
<svg style="left:102px;top:523px" width="18" height="20" viewBox="0 0 18 20"><path d="M1.500 9.500V18.500H9.500" fill="none" stroke="#c4c4c4" stroke-width="1"/><path d="M4.500 7.500H13.500V16.500H4.500Z" fill="#f1f1f1" stroke="#8e8e8e" stroke-width="1"/><path d="M7.500 4.500H16.500V13.500H7.500Z" fill="#e9e9e9" stroke="#8e8e8e" stroke-width="1"/><path d="M10.500 12V3.500C10.500 1.500 13.500 1.500 13.500 3.500V10.500C13.500 11.500 12 11.500 12 10.500V5" fill="none" stroke="#5b86bb" stroke-width="1.100"/></svg>
<div class="t" style="left:127.6px;top:527.1px;font-size:15px;letter-spacing:-0.672px;color:#000;">Feuchte_und_nasse_Bereiche</div>
<svg style="left:59px;top:552px" width="8" height="12" viewBox="0 0 8 12"><path d="M1.500 1L6.500 6L1.500 11" fill="none" stroke="#a6a6a6" stroke-width="1.500"/></svg>
<svg style="left:79px;top:550px" width="16" height="16" viewBox="0 0 16 16"><rect x=".5" y=".5" width="15" height="15" fill="#fff" stroke="#262626" stroke-width="1"/></svg>
<svg style="left:100.5px;top:548px" width="21" height="18" viewBox="0 0 20 16" preserveAspectRatio="none"><path d="M1.500 5C1.500 1 6 1.500 9 3C12 4.500 16 .5 18 3C19.500 6 19 10 16 10.500C13 11 11 8 8 10C5 12 1.500 11 1.500 5Z" fill="#d6d6d6" stroke="#9e9e9e" stroke-width="1"/></svg>
<div class="t" style="left:127.6px;top:551.1px;font-size:15px;letter-spacing:-0.154px;color:#7f7f7f;font-weight:bold;font-style:italic;">Bodenarten</div>
<svg style="left:79px;top:574px" width="16" height="16" viewBox="0 0 16 16"><rect x=".5" y=".5" width="15" height="15" fill="#fff" stroke="#262626" stroke-width="1"/></svg>
<svg style="left:103px;top:573px" width="16" height="16" viewBox="0 0 16 16"><rect width="16" height="16" fill="#a9c6e8"/><rect x="0" y="0" width="5.300" height="5.300" fill="#1f3454"/><rect x="10.700" y="0" width="5.300" height="5.300" fill="#2a4a78"/><rect x="5.300" y="5.300" width="5.400" height="5.400" fill="#1f3454"/><rect x="0" y="10.700" width="5.300" height="5.300" fill="#2a4a78"/><rect x="5.300" y="0" width="5.400" height="5.300" fill="#6f97cb"/><rect x="10.700" y="10.700" width="5.300" height="5.300" fill="#cfe0f4"/></svg>
<div class="t" style="left:127.6px;top:575.1px;font-size:15px;letter-spacing:-0.322px;color:#7f7f7f;font-weight:bold;font-style:italic;">WT_DGM1_rast</div>
<svg style="left:79px;top:598px" width="16" height="16" viewBox="0 0 16 16"><rect x=".5" y=".5" width="15" height="15" fill="#fff" stroke="#262626" stroke-width="1"/></svg>
<svg style="left:104px;top:598px" width="14" height="14" viewBox="0 0 14 14"><circle cx="7" cy="7" r="5.300" fill="#f39c26" stroke="#8a5a10" stroke-width="1"/></svg>
<div class="t" style="left:127.6px;top:599.1px;font-size:15px;letter-spacing:-0.431px;color:#7f7f7f;font-weight:bold;font-style:italic;">WT_DGM1_gpkg</div>
<svg style="left:79px;top:622px" width="16" height="16" viewBox="0 0 16 16"><rect x=".5" y=".5" width="15" height="15" fill="#fff" stroke="#262626" stroke-width="1"/></svg>
<svg style="left:104px;top:622px" width="14" height="14" viewBox="0 0 14 14"><circle cx="7" cy="7" r="5.300" fill="#c0393b" stroke="#7a2a2a" stroke-width="1"/></svg>
<div class="t" style="left:127.6px;top:623.1px;font-size:15px;letter-spacing:-0.457px;color:#7f7f7f;font-weight:bold;font-style:italic;">WT_DGM1_xyz</div>
<svg style="left:80px;top:644px" width="18" height="20" viewBox="0 0 18 20"><rect x=".5" y=".5" width="17" height="19" rx="2" fill="#f6f6f6" stroke="#9a9a9a"/><path d="M.5 5.500H17.500M.5 10.500H17.500M.5 15.500H17.500M6.500 5.500V19.500" stroke="#b4b4b4" stroke-width="1"/><rect x="1" y="1" width="16" height="4" fill="#dedede"/></svg>
<div class="t" style="left:105.5px;top:647.1px;font-size:15px;letter-spacing:-0.227px;color:#000;font-weight:bold;">Funde_WT_2017_2019</div>
<svg style="left:59px;top:672px" width="8" height="12" viewBox="0 0 8 12"><path d="M1.500 1L6.500 6L1.500 11" fill="none" stroke="#a6a6a6" stroke-width="1.500"/></svg>
<svg style="left:79px;top:670px" width="16" height="16" viewBox="0 0 16 16"><rect x=".5" y=".5" width="15" height="15" fill="#fff" stroke="#262626" stroke-width="1"/><path d="M3.200 8.200L6.500 11.500L13 4.200" fill="none" stroke="#1e1e1e" stroke-width="1.150"/></svg>
<svg style="left:103px;top:669px" width="16" height="16" viewBox="0 0 16 16"><rect width="16" height="16" fill="#a9c6e8"/><rect x="0" y="0" width="5.300" height="5.300" fill="#1f3454"/><rect x="10.700" y="0" width="5.300" height="5.300" fill="#2a4a78"/><rect x="5.300" y="5.300" width="5.400" height="5.400" fill="#1f3454"/><rect x="0" y="10.700" width="5.300" height="5.300" fill="#2a4a78"/><rect x="5.300" y="0" width="5.400" height="5.300" fill="#6f97cb"/><rect x="10.700" y="10.700" width="5.300" height="5.300" fill="#cfe0f4"/></svg>
<div class="t" style="left:127.6px;top:671.1px;font-size:15px;letter-spacing:-0.183px;color:#000;font-weight:bold;">OpenStreetMap Standard</div>
<svg style="left:59px;top:696px" width="8" height="12" viewBox="0 0 8 12"><path d="M1.500 1L6.500 6L1.500 11" fill="none" stroke="#a6a6a6" stroke-width="1.500"/></svg>
<svg style="left:79px;top:694px" width="16" height="16" viewBox="0 0 16 16"><rect x=".5" y=".5" width="15" height="15" fill="#fff" stroke="#262626" stroke-width="1"/></svg>
<svg style="left:103px;top:693px" width="16" height="16" viewBox="0 0 16 16"><rect width="16" height="16" fill="#a9c6e8"/><rect x="0" y="0" width="5.300" height="5.300" fill="#1f3454"/><rect x="10.700" y="0" width="5.300" height="5.300" fill="#2a4a78"/><rect x="5.300" y="5.300" width="5.400" height="5.400" fill="#1f3454"/><rect x="0" y="10.700" width="5.300" height="5.300" fill="#2a4a78"/><rect x="5.300" y="0" width="5.400" height="5.300" fill="#6f97cb"/><rect x="10.700" y="10.700" width="5.300" height="5.300" fill="#cfe0f4"/></svg>
<div class="t" style="left:127.6px;top:695.1px;font-size:15px;letter-spacing:-0.253px;color:#7f7f7f;font-weight:bold;font-style:italic;">WMS LGRB-BW BK50: Bodenkarte 1 : 50 000</div>
<svg style="left:59px;top:720px" width="8" height="12" viewBox="0 0 8 12"><path d="M1.500 1L6.500 6L1.500 11" fill="none" stroke="#a6a6a6" stroke-width="1.500"/></svg>
<svg style="left:79px;top:718px" width="16" height="16" viewBox="0 0 16 16"><rect x=".5" y=".5" width="15" height="15" fill="#fff" stroke="#262626" stroke-width="1"/></svg>
<svg style="left:103px;top:717px" width="16" height="16" viewBox="0 0 16 16"><rect width="16" height="16" fill="#a9c6e8"/><rect x="0" y="0" width="5.300" height="5.300" fill="#1f3454"/><rect x="10.700" y="0" width="5.300" height="5.300" fill="#2a4a78"/><rect x="5.300" y="5.300" width="5.400" height="5.400" fill="#1f3454"/><rect x="0" y="10.700" width="5.300" height="5.300" fill="#2a4a78"/><rect x="5.300" y="0" width="5.400" height="5.300" fill="#6f97cb"/><rect x="10.700" y="10.700" width="5.300" height="5.300" fill="#cfe0f4"/></svg>
<div class="t" style="left:127.6px;top:719.1px;font-size:15px;letter-spacing:-0.253px;color:#7f7f7f;font-weight:bold;font-style:italic;">WMS LGRB-BW GK50: Geologische Karte</div>
</div></div>
<div class="a" style="left:51px;top:973px;width:367px;height:20px;background:#f0f0f0;"></div>
<div class="a" style="left:72px;top:973px;width:236px;height:20px;background:#cdcdcd;"></div>
<svg style="left:56px;top:977px" width="9" height="11" viewBox="0 0 9 11"><path d="M7 1L2 5.500L7 10" fill="none" stroke="#3a3a3a" stroke-width="1.700"/></svg>
<svg style="left:402px;top:977px" width="9" height="11" viewBox="0 0 9 11"><path d="M2 1L7 5.500L2 10" fill="none" stroke="#3a3a3a" stroke-width="1.700"/></svg>
<!-- dialog -->
<div class="a" style="left:853px;top:158px;width:978px;height:793px;background:#f0f0f0;box-shadow:0 2px 9px rgba(0,0,0,.25);"></div>
<div class="a" style="left:853px;top:158px;width:978px;height:793px;border:1px solid #4f5a4f;box-sizing:border-box;"></div>
<div class="a" style="left:854px;top:159px;width:976px;height:37px;background:#fff;"></div>
<svg style="left:862.300px;top:167px" width="23" height="23" viewBox="0 0 22 22"><circle cx="10" cy="10" r="7.300" fill="none" stroke="#7aa838" stroke-width="4"/><path d="M11.500 11.500L18.600 18.600" stroke="#6c9c34" stroke-width="4.300"/><path d="M8.300 8.300L12.800 9.800L9.800 12.800Z" fill="#ee8a1e"/><path d="M10.500 10L12.800 9.800L9.800 12.800L10 10.500Z" fill="#f0e070"/></svg>
<div class="t" style="left:888.500px;top:169.300px;font-size:15.200px;color:#000;letter-spacing:.04px;">Linien zu Polygonen</div>
<svg style="left:1803px;top:171px" width="12" height="12" viewBox="0 0 12 12"><path d="M.5 .5L11.500 11.500M11.500 .5L.5 11.500" stroke="#111" stroke-width="1.100"/></svg>
<div class="a" style="left:867px;top:232px;width:676px;height:611px;background:#fff;border:1px solid #dfdfdf;box-sizing:border-box;"></div>
<div class="a" style="left:869px;top:211px;width:87px;height:22px;background:#f0f0f0;border:1px solid #d9d9d9;border-bottom:none;box-sizing:border-box;"></div>
<div class="a" style="left:955px;top:209px;width:81px;height:24px;background:#fff;border:1px solid #d9d9d9;border-bottom:none;box-sizing:border-box;"></div>
<div class="t dj" style="left:882px;top:217.03px;font-size:12.5px;color:#000;letter-spacing:0.061px;">Parameter</div>
<div class="t dj" style="left:972px;top:216.03px;font-size:12.5px;color:#000;letter-spacing:0.081px;">Protokoll</div>
<div class="a" style="left:869px;top:234px;width:672px;height:578px;background:#fff;border:1px solid #7a7a7a;box-sizing:border-box;"></div>
<div class="t dj" style="left:874px;top:240.50px;font-size:13px;color:#808080;letter-spacing:-0.015px;">QGIS-Version: 3.16.2-Hannover</div>
<div class="t dj" style="left:874px;top:256.50px;font-size:13px;color:#808080;letter-spacing:-0.152px;">QGIS-Codeversion: f1660f9da5</div>
<div class="t dj" style="left:874px;top:272.50px;font-size:13px;color:#808080;letter-spacing:0.028px;">Qt-Version: 5.11.2</div>
<div class="t dj" style="left:874px;top:288.50px;font-size:13px;color:#808080;letter-spacing:-0.020px;">GDAL-Version: 3.1.4</div>
<div class="t dj" style="left:874px;top:304.50px;font-size:13px;color:#808080;letter-spacing:0.044px;">GEOS-Version: 3.8.1-CAPI-1.13.3</div>
<div class="t dj" style="left:874px;top:320.50px;font-size:13px;color:#808080;letter-spacing:0.034px;">PROJ-Version: Rel. 6.3.2, May 1st, 2020</div>
<div class="t dj" style="left:874px;top:336.50px;font-size:13px;color:#000;letter-spacing:-0.188px;">Verarbeite Algorithmus…</div>
<div class="t dj" style="left:874px;top:352.50px;font-size:13px;color:#000;font-weight:bold;letter-spacing:-0.147px;">Algorithmus Linien zu Polygonen startet…</div>
<div class="t dj" style="left:874px;top:368.50px;font-size:13px;color:#000;letter-spacing:-0.190px;">Eingabeparameter:</div>
<div class="t mono" style="left:874px;top:384.82px;font-size:13.333px;color:#1c1c1c;">{ 'INPUT' : 'D:/Sci/_QGIS für Pilzfreunde/gpx-Importe/WT/NSG.gpx|</div>
<div class="t mono" style="left:874px;top:400.82px;font-size:13.333px;color:#1c1c1c;">layername=tracks', 'OUTPUT' : 'D:/Sci/_QGIS für Pilzfreunde/Shape-Exporte/WT/</div>
<div class="t mono" style="left:874px;top:416.82px;font-size:13.333px;color:#1c1c1c;">nsg_1983_flaeche.shp' }</div>
<div class="t dj" style="left:874px;top:448.50px;font-size:13px;color:#000;letter-spacing:-0.222px;">Ausführung nach 0.12 Sekunden abgeschlossen</div>
<div class="t dj" style="left:874px;top:464.50px;font-size:13px;color:#000;letter-spacing:-0.137px;">Ergebnisse:</div>
<div class="t mono" style="left:874px;top:480.82px;font-size:13.333px;color:#1c1c1c;">{'OUTPUT': 'D:/Sci/_QGIS für Pilzfreunde/Shape-Exporte/WT/nsg_1983_flaeche.shp'}</div>
<div class="t dj" style="left:874px;top:512.50px;font-size:13px;color:#000;letter-spacing:-0.216px;">Lade Ergebnis Layer</div>
<div class="t dj" style="left:874px;top:528.50px;font-size:13px;color:#000;letter-spacing:-0.235px;">Algorithmus 'Linien zu Polygonen' beendet</div>
<svg style="left:1460px;top:817.500px" width="18" height="18.500" viewBox="0 0 24 24" preserveAspectRatio="none"><rect x="1.500" y="1.500" width="21" height="21" rx="2.500" fill="#6a90c2" stroke="#4a72a8" stroke-width="1.300"/><rect x="5" y="2.500" width="14" height="8.500" fill="#f4f4f4"/><path d="M6.500 5H17.500M6.500 7.500H17.500" stroke="#8a6a5a" stroke-width="1.100"/><rect x="6" y="14.500" width="12" height="7" fill="#f0f0f0"/><rect x="8" y="16" width="3" height="4" fill="#2f4f78"/></svg>
<svg style="left:1490.500px;top:818px" width="15" height="18" viewBox="0 0 15 18"><path d="M5.500 1.500H10.500L13.500 4.500V12.500H5.500Z" fill="#f4f4f4" stroke="#b4b4b4" stroke-width=".9"/><path d="M1.500 5.500H7L10 8.500V16.500H1.500Z" fill="#f0f0f0" stroke="#7a7a7a" stroke-width="1"/><path d="M3.500 10H8M3.500 12H8M3.500 14H8" stroke="#9a9a9a" stroke-width=".9"/><path d="M7 5.500V8.500H10" fill="none" stroke="#7a7a7a" stroke-width=".8"/></svg>
<svg style="left:1518px;top:817px" width="18" height="20" viewBox="0 0 18 20"><path d="M2.500 2L7 8.500" stroke="#c89a40" stroke-width="2" stroke-linecap="round"/><circle cx="2.500" cy="2" r="1.200" fill="none" stroke="#b07a20" stroke-width=".8"/><path d="M6 10L9.500 7.500L16.500 15L8.500 19Z" fill="#e6c830" stroke="#d0b020" stroke-width=".6"/><path d="M5.500 9.300L9 7" stroke="#b8401a" stroke-width="1.800"/><ellipse cx="13" cy="18.300" rx="4.500" ry="1" fill="#ccc" opacity=".7"/></svg>
<svg style="left:1548px;top:210px" width="6" height="8" viewBox="0 0 6 8"><path d="M5 .5V7.500L.5 4Z" fill="#111"/></svg>
<div class="a" style="left:1561px;top:209px;width:256px;height:635px;background:#fff;border:1px solid #767676;box-sizing:border-box;"></div>
<div class="t dj" style="left:1566px;top:217.50px;font-size:19.5px;color:#444;font-weight:bold;letter-spacing:0.193px;">Linien zu Polygonen</div>
<div class="t dj" style="left:1566px;top:253.25px;font-size:12px;color:#5a5a5a;letter-spacing:0.263px;">Dieser Algorithmus erzeugt einen</div>
<div class="t dj" style="left:1566px;top:269.25px;font-size:12px;color:#5a5a5a;letter-spacing:0.272px;">Polygonlayer aus den Linien des</div>
<div class="t dj" style="left:1566px;top:285.25px;font-size:12px;color:#5a5a5a;letter-spacing:0.241px;">Eingabelayers als Ringe.</div>
<div class="t dj" style="left:1566px;top:313.25px;font-size:12px;color:#5a5a5a;letter-spacing:0.215px;">Die Attributtabelle des Ausgabelayers ist</div>
<div class="t dj" style="left:1566px;top:329.25px;font-size:12px;color:#5a5a5a;letter-spacing:0.265px;">die gleiche wie die des Eingabelayers.</div>
<div class="a" style="left:867px;top:876px;width:811px;height:24px;background:#e6e6e6;border:1px solid #bcbcbc;box-sizing:border-box;"></div>
<div class="t dj" style="left:1687px;top:882.42px;font-size:12.5px;color:#000;letter-spacing:0.580px;">0%</div>
<div class="a" style="left:1725px;top:874px;width:91px;height:27px;background:#cccccc;border:1px solid #bfbfbf;box-sizing:border-box;"></div>
<div class="t dj" style="left:1740.0px;top:882.32px;font-size:12.5px;color:#838383;letter-spacing:0.044px;">Abbrechen</div>
<div class="a" style="left:868px;top:910px;width:158px;height:26px;background:#e1e1e1;border:1px solid #adadad;box-sizing:border-box;"></div>
<div class="t dj" style="left:871.5px;top:917.82px;font-size:12.5px;color:#000;letter-spacing:0.019px;">Als Batchprozess starten…</div>
<div class="a" style="left:1505px;top:910px;width:111px;height:26px;background:#e1e1e1;border:1px solid #adadad;box-sizing:border-box;"></div>
<div class="t dj" style="left:1508.5px;top:917.82px;font-size:12.5px;color:#000;letter-spacing:0.148px;">Parameter ändern</div>
<div class="a" style="left:1625px;top:910px;width:91px;height:26px;background:#e1e1e1;border:2px solid #0078d7;box-sizing:border-box;"></div>
<div class="t dj" style="left:1643.0px;top:917.82px;font-size:12.5px;color:#000;letter-spacing:0.027px;">Schließen</div>
<div class="a" style="left:1725px;top:910px;width:91px;height:26px;background:#e1e1e1;border:1px solid #adadad;box-sizing:border-box;"></div>
<div class="t dj" style="left:1757.5px;top:917.82px;font-size:12.5px;color:#000;letter-spacing:0.083px;">Hilfe</div>
<!-- status bar -->
<div class="a" style="left:0;top:998px;width:1920px;height:33px;background:#f0f0f0;"></div>
<div class="a" style="left:0;top:998px;width:1920px;height:1px;background:#8f8f8f;"></div>
<div class="a" style="left:0;top:1029px;width:1920px;height:2px;background:#1a1a1a;"></div>
<div class="a" style="left:4px;top:1004px;width:277px;height:22px;background:#fff;border:1px solid #6a6a6a;box-sizing:border-box;"></div>
<svg style="left:12px;top:1008px" width="14" height="14" viewBox="0 0 14 14"><circle cx="5.500" cy="5.500" r="4" fill="none" stroke="#8a8a8a" stroke-width="1.300"/><path d="M8.500 8.500L12.500 12.500" stroke="#8a8a8a" stroke-width="1.600"/></svg>
<div class="t dj" style="left:33px;top:1008.50px;font-size:13px;color:#6d6d6d;letter-spacing:-0.121px;">Zu suchender Typ (Strg+K)</div>
<div class="t dj" style="left:947px;top:1008.50px;font-size:13px;color:#000;letter-spacing:-0.294px;">Koordinate</div>
<div class="a" style="left:1011px;top:1004px;width:110px;height:23px;background:#fff;border:1px solid #7a7a7a;box-sizing:border-box;"></div>
<div class="t dj" style="left:1018px;top:1008.50px;font-size:13px;color:#000;letter-spacing:-0.423px;">474586,5397146</div>
<svg style="left:1123px;top:1004px" width="22" height="22" viewBox="0 0 22 22"><ellipse cx="9" cy="9" rx="6.500" ry="7.500" fill="#fff" stroke="#222" stroke-width="1.400" transform="rotate(-20 9 9)"/><path d="M7 4L9 11" stroke="#222" stroke-width="2"/><circle cx="12" cy="16" r="4.500" fill="#fff" stroke="#222" stroke-width="1.200"/><circle cx="12" cy="16" r="1.500" fill="#222"/><path d="M16 6L20 3" stroke="#222" stroke-width="1" stroke-dasharray="1.500 1.500"/></svg>
<div class="t dj" style="left:1157px;top:1008.50px;font-size:13px;color:#000;letter-spacing:-0.414px;">Maßstab</div>
<div class="a" style="left:1208px;top:1004px;width:91px;height:23px;background:#fff;border:1px solid #7a7a7a;box-sizing:border-box;"></div>
<div class="t dj" style="left:1213px;top:1008.50px;font-size:13px;color:#000;letter-spacing:-0.190px;">1:6000</div>
<svg style="left:1282px;top:1012px" width="12" height="8" viewBox="0 0 12 8"><path d="M1 1.500L6 6.500L11 1.500" fill="none" stroke="#333" stroke-width="1.100"/></svg>
<svg style="left:1309px;top:1005px" width="18" height="20" viewBox="0 0 18 20"><path d="M5 10V6.500C5 2.500 13 2.500 13 6.500V10" fill="none" stroke="#8a8a8a" stroke-width="2"/><rect x="2" y="9.500" width="14" height="9.500" rx="1.500" fill="#6f6f6f"/></svg>
<div class="t dj" style="left:1335px;top:1008.50px;font-size:13px;color:#000;letter-spacing:-0.083px;">Vergrößerung</div>
<div class="a" style="left:1417px;top:1004px;width:86px;height:23px;background:#fff;border:1px solid #7a7a7a;box-sizing:border-box;"></div>
<div class="t dj" style="left:1421px;top:1008.50px;font-size:13px;color:#000;letter-spacing:-0.233px;">100%</div>
<svg style="left:1488px;top:1005px" width="14" height="21" viewBox="0 0 14 21"><rect x=".5" y=".5" width="13" height="9.500" fill="#f0f0f0" stroke="#adadad"/><rect x=".5" y="10.500" width="13" height="10" fill="#f0f0f0" stroke="#adadad"/><path d="M3.500 7.500L7 3.500L10.500 7.500ZM3.500 13.500L7 17.500L10.500 13.500Z" fill="#111"/></svg>
<div class="t dj" style="left:1513px;top:1008.50px;font-size:13px;color:#000;letter-spacing:-0.342px;">Drehung</div>
<div class="a" style="left:1570px;top:1004px;width:85px;height:23px;background:#fff;border:1px solid #7a7a7a;box-sizing:border-box;"></div>
<div class="t dj" style="left:1573px;top:1008.50px;font-size:13px;color:#000;letter-spacing:-0.230px;">0,0 °</div>
<svg style="left:1640px;top:1005px" width="14" height="21" viewBox="0 0 14 21"><rect x=".5" y=".5" width="13" height="9.500" fill="#f0f0f0" stroke="#adadad"/><rect x=".5" y="10.500" width="13" height="10" fill="#f0f0f0" stroke="#adadad"/><path d="M3.500 7.500L7 3.500L10.500 7.500ZM3.500 13.500L7 17.500L10.500 13.500Z" fill="#111"/></svg>
<svg style="left:1661px;top:1007px" width="17" height="17" viewBox="0 0 17 17"><rect x=".5" y=".5" width="16" height="16" fill="#fff" stroke="#1e1e1e"/><path d="M3.500 8.500L7 12L13.500 4.500" fill="none" stroke="#1e1e1e" stroke-width="1.200"/></svg>
<div class="t dj" style="left:1683px;top:1008.50px;font-size:13px;color:#000;letter-spacing:-0.416px;">Zeichnen</div>
<svg style="left:1750px;top:1005px" width="21" height="20" viewBox="0 0 21 20"><ellipse cx="10.500" cy="9" rx="9" ry="7.500" fill="none" stroke="#6a6a6a" stroke-width="1.200"/><ellipse cx="10.500" cy="9" rx="4" ry="7.500" fill="none" stroke="#6a6a6a" stroke-width="1"/><path d="M1.500 9H19.500M3 5H18M3 13H18M10.500 1.500V16.500" stroke="#6a6a6a" stroke-width="1"/><path d="M5 18.500H16" stroke="#6a6a6a" stroke-width="1.300"/></svg>
<div class="t dj" style="left:1775px;top:1008.50px;font-size:13px;color:#000;letter-spacing:-0.207px;">EPSG:25832</div>
<svg style="left:1862px;top:1004px" width="23" height="23" viewBox="0 0 23 23"><path d="M11.500 2C5.500 2 1.500 5.500 1.500 10C1.500 14.500 5.500 17.500 10 17.800L13 21.500V17.600C18 16.800 21.500 14 21.500 10C21.500 5.500 17.500 2 11.500 2Z" fill="#5f5f5f"/><circle cx="7" cy="10" r="1.600" fill="#fff"/><circle cx="11.500" cy="10" r="1.600" fill="#fff"/><circle cx="16" cy="10" r="1.600" fill="#fff"/></svg>
<svg style="left:1894px;top:1002px" width="26" height="26" viewBox="0 0 26 26"><path d="M3 8H9C7 4 13 3 12 8H19V13C23 11 24 17 19 16V22H3V16C7 17 7 12 3 13Z" fill="#b9b9b9" stroke="#6a6a6a" stroke-width="1"/><path d="M14 16H21M18 13L21 16L18 19" fill="none" stroke="#6a6a6a" stroke-width="1.300"/></svg>
<!-- annotations -->
<svg style="left:0;top:0" width="1920" height="1031" viewBox="0 0 1920 1031">
<rect x="113.800" y="326.900" width="206.200" height="31.800" fill="none" stroke="#ee1010" stroke-width="3.700"/>
<path d="M321 339C420 335.500 470 380 530 420S640 483.500 716 491.500" fill="none" stroke="#f01010" stroke-width="2.900"/>
<path d="M740 492.300L712 484L717.500 491.500L712 499.500Z" fill="#f01010"/>
<rect x="608.500" y="924.500" width="131" height="43" rx="11" fill="#ffff85" stroke="#111" stroke-width="1.200"/>
<text x="674" y="952" font-family="Liberation Sans,sans-serif" font-size="16.500" font-weight="bold" text-anchor="middle" fill="#000">Bild 6</text>
<path d="M1688 942.500L1688 959L1691.800 955.800L1694.500 962L1697.500 960.600L1694.800 954.800L1699.500 954.300Z" fill="#b400c8" stroke="#5a0a6a" stroke-width=".7" stroke-linejoin="round"/>
</svg>
</body>
</html>
